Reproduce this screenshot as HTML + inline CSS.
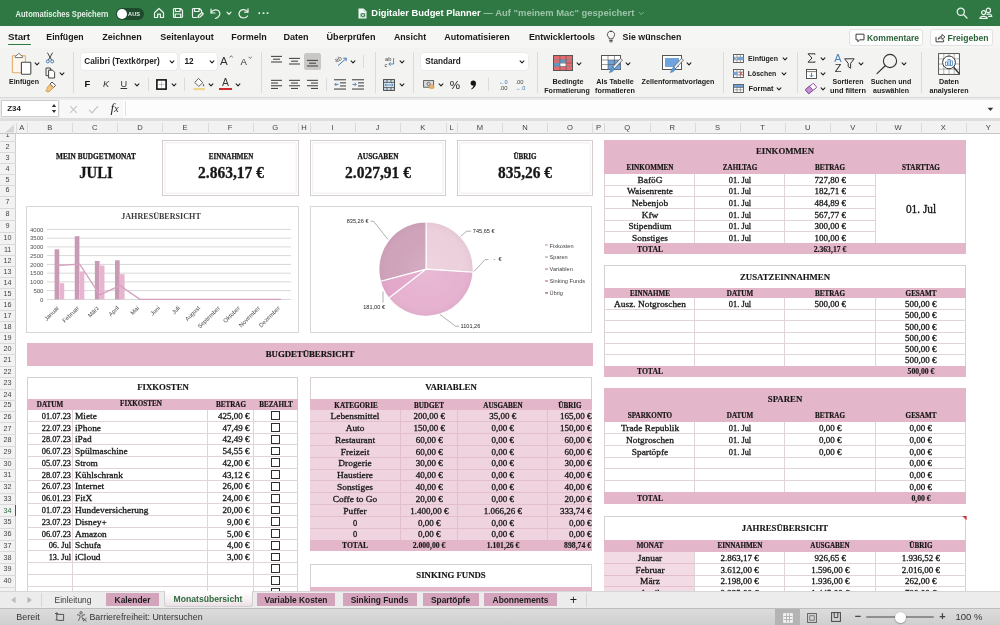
<!DOCTYPE html>
<html><head><meta charset="utf-8"><title>Excel</title>
<style>
html,body{margin:0;padding:0;}
body{width:1000px;height:625px;overflow:hidden;position:relative;background:#fff;font-family:"Liberation Sans",sans-serif;}
div{box-sizing:border-box;}
#w{position:absolute;left:0;top:0;width:1000px;height:625px;overflow:hidden;will-change:transform;}
svg{position:absolute;overflow:visible;}
.t{position:absolute;width:300px;white-space:nowrap;font-family:'Liberation Serif',serif;color:#161616;}
.c{text-align:center;transform-origin:center center;}
.r{text-align:right;transform-origin:right center;}
.l{text-align:left;transform-origin:left center;}
</style></head><body><div id="w">
<div style="position:absolute;left:0.00px;top:0.00px;width:1000.00px;height:26.00px;background:#2f7844;"></div>
<div class="t c" style="left:-88.5px;top:9px;height:11px;line-height:11px;font-size:8.2px;font-weight:bold;color:#e4efe7;font-family:'Liberation Sans', sans-serif;transform:scaleX(0.924);">Automatisches Speichern</div>
<div style="position:absolute;left:115.80px;top:7.80px;width:28.50px;height:12.00px;background:#1f4a2d;border-radius:6px;"></div>
<div style="position:absolute;left:117.00px;top:9.00px;width:9.60px;height:9.60px;background:#fff;border-radius:5px;"></div>
<div class="t c" style="left:-15.7px;top:10px;height:8px;line-height:8px;font-size:6.0px;font-weight:bold;color:#e8f0ea;font-family:'Liberation Sans', sans-serif;transform:scaleX(0.931);">AUS</div>
<svg style="left:153.00px;top:7.00px;" width="12" height="12" viewBox="0 0 12 12"><path d="M1.5 5.8 L6 1.5 L10.5 5.8 V10.5 H7.4 V7.2 H4.6 V10.5 H1.5 Z" stroke="#eaf3ec" fill="none" stroke-width="1.2" stroke-linecap="round" stroke-linejoin="round"/></svg>
<svg style="left:171.50px;top:7.00px;" width="12" height="12" viewBox="0 0 12 12"><path d="M1.5 2.5 a1 1 0 0 1 1-1 H8.5 L10.5 3.5 V9.5 a1 1 0 0 1 -1 1 H2.5 a1 1 0 0 1 -1 -1 Z M3.5 1.8 V4.5 H8 V1.8 M3.3 10.3 V7 H8.7 V10.3" stroke="#eaf3ec" fill="none" stroke-width="1.2" stroke-linecap="round" stroke-linejoin="round"/></svg>
<svg style="left:190.50px;top:7.00px;" width="13" height="12" viewBox="0 0 13 12"><path d="M10.5 5 V3.5 L8.5 1.5 H2.5 a1 1 0 0 0 -1 1 V9.5 a1 1 0 0 0 1 1 H5.5 M3.5 1.8 V4.5 H8 V1.8" stroke="#eaf3ec" fill="none" stroke-width="1.2" stroke-linecap="round" stroke-linejoin="round"/><path d="M7 10.5 L7.5 8.5 L11 5.5 L12.3 7 L9 10 Z" stroke="#eaf3ec" fill="none" stroke-width="1.2" stroke-linecap="round" stroke-linejoin="round"/></svg>
<svg style="left:209.00px;top:6.50px;" width="13" height="13" viewBox="0 0 13 13"><path d="M2 2 V6 H6" stroke="#eaf3ec" fill="none" stroke-width="1.2" stroke-linecap="round" stroke-linejoin="round"/><path d="M2.2 5.8 C4 2.5 8 2 10 4.2 C12 6.8 10.5 10 6.5 11.5" stroke="#eaf3ec" fill="none" stroke-width="1.2" stroke-linecap="round" stroke-linejoin="round"/></svg>
<svg style="left:225.50px;top:11.00px;" width="6" height="5" viewBox="0 0 6 5"><path d="M1 1.2 L3 3.4 L5 1.2" stroke="#eaf3ec" fill="none" stroke-width="1.2" stroke-linecap="round" stroke-linejoin="round"/></svg>
<svg style="left:236.50px;top:6.50px;" width="13" height="13" viewBox="0 0 13 13"><path d="M11 1.8 V5.2 H7.6" stroke="#eaf3ec" fill="none" stroke-width="1.2" stroke-linecap="round" stroke-linejoin="round"/><path d="M10.8 5 C9 2 4.5 1.6 2.6 4.6 C1 7.6 2.8 10.8 6.3 11 C8 11 9.6 10.4 10.6 9" stroke="#eaf3ec" fill="none" stroke-width="1.2" stroke-linecap="round" stroke-linejoin="round"/></svg>
<div style="position:absolute;left:256.00px;top:3.00px;width:16.00px;height:20.00px;line-height:20.00px;font-family:'Liberation Sans', sans-serif;font-size:11px;font-weight:bold;text-align:center;color:#eaf3ec;white-space:nowrap;letter-spacing:0.5px;">&#183;&#183;&#183;</div>
<svg style="left:358.00px;top:7.50px;" width="9" height="11" viewBox="0 0 9 11"><path d="M0.5 0.5 H5.6 L8.5 3.4 V10.5 H0.5 Z" fill="#f3f8f4"/><path d="M5.6 0.5 V3.4 H8.5" fill="#b9d4c0"/><rect x="2.6" y="5.2" width="4.6" height="4" fill="#2f7844"/><path d="M3.3 5.9 L6.5 8.6 M6.5 5.9 L3.3 8.6" stroke="#fff" stroke-width="0.8"/></svg>
<div class="t c" style="left:276.1px;top:7px;height:12px;line-height:12px;font-size:9.2px;font-weight:bold;color:#ffffff;font-family:'Liberation Sans', sans-serif;transform:scaleX(1.019);">Digitaler Budget Planner</div>
<div class="t c" style="left:408.8px;top:7px;height:12px;line-height:12px;font-size:9.2px;font-weight:bold;color:#9cc3a7;font-family:'Liberation Sans', sans-serif;transform:scaleX(1.024);">— Auf "meinem Mac" gespeichert</div>
<svg style="left:637.50px;top:11.00px;" width="7" height="5" viewBox="0 0 7 5"><path d="M1 1.2 L3.3 3.5 L5.6 1.2" stroke="#8db899" fill="none" stroke-width="1"/></svg>
<svg style="left:956.00px;top:7.00px;" width="12" height="12" viewBox="0 0 12 12"><circle cx="4.8" cy="4.8" r="3.6" stroke="#eaf3ec" fill="none" stroke-width="1.2" stroke-linecap="round" stroke-linejoin="round"/><path d="M7.5 7.5 L11 11" stroke="#eaf3ec" fill="none" stroke-width="1.2" stroke-linecap="round" stroke-linejoin="round"/></svg>
<svg style="left:979.00px;top:6.50px;" width="14" height="13" viewBox="0 0 14 13"><circle cx="9.3" cy="3.4" r="2.2" stroke="#eaf3ec" fill="none" stroke-width="1.2" stroke-linecap="round" stroke-linejoin="round"/><circle cx="4.6" cy="5.6" r="2" stroke="#eaf3ec" fill="none" stroke-width="1.2" stroke-linecap="round" stroke-linejoin="round"/><path d="M1 11.5 C1 8.6 8 8.6 8.2 11.5 Z" stroke="#eaf3ec" fill="none" stroke-width="1.2" stroke-linecap="round" stroke-linejoin="round"/><path d="M8 7.4 C10 6.6 12.8 7.2 12.8 9.4 H9.6" stroke="#eaf3ec" fill="none" stroke-width="1.2" stroke-linecap="round" stroke-linejoin="round"/></svg>
<div style="position:absolute;left:0.00px;top:26.00px;width:1000.00px;height:22.00px;background:#f6f6f5;"></div>
<div class="t c" style="left:-130.9px;top:31px;height:12px;line-height:12px;font-size:9.2px;font-weight:bold;color:#1a1a1a;font-family:'Liberation Sans', sans-serif;transform:scaleX(1.059);">Start</div>
<div class="t c" style="left:-84.7px;top:31px;height:12px;line-height:12px;font-size:9.2px;font-weight:bold;color:#1a1a1a;font-family:'Liberation Sans', sans-serif;transform:scaleX(0.950);">Einfügen</div>
<div class="t c" style="left:-27.8px;top:31px;height:12px;line-height:12px;font-size:9.2px;font-weight:bold;color:#1a1a1a;font-family:'Liberation Sans', sans-serif;transform:scaleX(0.981);">Zeichnen</div>
<div class="t c" style="left:36.8px;top:31px;height:12px;line-height:12px;font-size:9.2px;font-weight:bold;color:#1a1a1a;font-family:'Liberation Sans', sans-serif;transform:scaleX(0.978);">Seitenlayout</div>
<div class="t c" style="left:98.8px;top:31px;height:12px;line-height:12px;font-size:9.2px;font-weight:bold;color:#1a1a1a;font-family:'Liberation Sans', sans-serif;transform:scaleX(0.978);">Formeln</div>
<div class="t c" style="left:146.0px;top:31px;height:12px;line-height:12px;font-size:9.2px;font-weight:bold;color:#1a1a1a;font-family:'Liberation Sans', sans-serif;transform:scaleX(0.986);">Daten</div>
<div class="t c" style="left:200.5px;top:31px;height:12px;line-height:12px;font-size:9.2px;font-weight:bold;color:#1a1a1a;font-family:'Liberation Sans', sans-serif;transform:scaleX(0.988);">Überprüfen</div>
<div class="t c" style="left:259.5px;top:31px;height:12px;line-height:12px;font-size:9.2px;font-weight:bold;color:#1a1a1a;font-family:'Liberation Sans', sans-serif;transform:scaleX(0.955);">Ansicht</div>
<div class="t c" style="left:326.7px;top:31px;height:12px;line-height:12px;font-size:9.2px;font-weight:bold;color:#1a1a1a;font-family:'Liberation Sans', sans-serif;transform:scaleX(0.977);">Automatisieren</div>
<div class="t c" style="left:411.5px;top:31px;height:12px;line-height:12px;font-size:9.2px;font-weight:bold;color:#1a1a1a;font-family:'Liberation Sans', sans-serif;transform:scaleX(0.975);">Entwicklertools</div>
<div class="t c" style="left:502.2px;top:31px;height:12px;line-height:12px;font-size:9.2px;font-weight:bold;color:#1a1a1a;font-family:'Liberation Sans', sans-serif;transform:scaleX(0.959);">Sie wünschen</div>
<div style="position:absolute;left:8.00px;top:43.60px;width:23.00px;height:1.70px;background:#2f7844;border-radius:1px;"></div>
<svg style="left:606.00px;top:30.00px;" width="10" height="13" viewBox="0 0 10 13"><path d="M5 1.2 C2.6 1.2 1.4 3 1.4 4.6 C1.4 6.4 3 7.2 3.2 8.8 H6.8 C7 7.2 8.6 6.4 8.6 4.6 C8.6 3 7.4 1.2 5 1.2 Z M3.6 10.4 H6.4 M4 11.8 H6" stroke="#333" stroke-width="0.9" fill="none" stroke-linecap="round"/></svg>
<div style="position:absolute;left:849.00px;top:28.50px;width:74.00px;height:17.00px;background:#fdfdfd;border:1px solid #e2e2e2;border-radius:3px;"></div>
<svg style="left:854.80px;top:32.60px;" width="10" height="10" viewBox="0 0 10 10"><path d="M1 1.2 H9 V6.8 H4.6 L2.8 8.8 V6.8 H1 Z" stroke="#3f3f3f" fill="none" stroke-width="1" stroke-linejoin="round"/></svg>
<div class="t c" style="left:742.5px;top:32px;height:12px;line-height:12px;font-size:8.8px;font-weight:bold;color:#2b6238;font-family:'Liberation Sans', sans-serif;transform:scaleX(0.969);">Kommentare</div>
<div style="position:absolute;left:929.50px;top:28.50px;width:63.50px;height:17.00px;background:#fdfdfd;border:1px solid #e2e2e2;border-radius:3px;"></div>
<svg style="left:935.00px;top:32.60px;" width="11" height="10" viewBox="0 0 11 10"><path d="M1 4 V8.8 H8.6 V6.6" stroke="#3f3f3f" fill="none" stroke-width="1"/><path d="M3.2 6.4 C3.6 4.2 5.2 3.2 7 3.2 V1.4 L10 4 L7 6.4 V4.8 C5.6 4.8 4.2 5.2 3.2 6.4 Z" stroke="#3f3f3f" fill="none" stroke-width="0.9" stroke-linejoin="round"/></svg>
<div class="t c" style="left:818.0px;top:32px;height:12px;line-height:12px;font-size:8.8px;font-weight:bold;color:#2b6238;font-family:'Liberation Sans', sans-serif;transform:scaleX(0.977);">Freigeben</div>
<div style="position:absolute;left:0.00px;top:48.00px;width:1000.00px;height:49.50px;background:#f3f3f2;"></div>
<div style="position:absolute;left:0.00px;top:97.00px;width:1000.00px;height:1.00px;background:#d9d9d9;"></div>
<div style="position:absolute;left:73.00px;top:52.00px;width:1.00px;height:41.00px;background:#dbdbdb;"></div>
<div style="position:absolute;left:260.50px;top:52.00px;width:1.00px;height:41.00px;background:#dbdbdb;"></div>
<div style="position:absolute;left:375.00px;top:52.00px;width:1.00px;height:41.00px;background:#dbdbdb;"></div>
<div style="position:absolute;left:413.00px;top:52.00px;width:1.00px;height:41.00px;background:#dbdbdb;"></div>
<div style="position:absolute;left:537.00px;top:52.00px;width:1.00px;height:41.00px;background:#dbdbdb;"></div>
<div style="position:absolute;left:723.00px;top:52.00px;width:1.00px;height:41.00px;background:#dbdbdb;"></div>
<div style="position:absolute;left:797.00px;top:52.00px;width:1.00px;height:41.00px;background:#dbdbdb;"></div>
<div style="position:absolute;left:921.00px;top:52.00px;width:1.00px;height:41.00px;background:#dbdbdb;"></div>
<svg style="left:11.00px;top:51.60px;" width="22" height="24" viewBox="0 0 22 24"><rect x="1.4" y="3.6" width="13" height="17.2" rx="1" fill="#fdf6ec" stroke="#e0b070" stroke-width="1.1"/><path d="M4.2 4.6 L7.9 1.4 L11.6 4.6 V5.6 H4.2 Z" fill="#fff" stroke="#666" stroke-width="0.9" stroke-linejoin="round"/><rect x="10.4" y="10.2" width="9.4" height="12" rx="0.8" fill="#fff" stroke="#4a4a4a" stroke-width="1.1"/></svg>
<svg style="left:33.50px;top:61.50px;" width="6" height="4" viewBox="0 0 6 4"><path d="M1.1 0.9 L3 2.9 L4.9 0.9" stroke="#222" fill="none" stroke-width="1.1" stroke-linecap="round" stroke-linejoin="round"/></svg>
<div class="t c" style="left:-126.5px;top:76px;height:11px;line-height:11px;font-size:7.7px;font-weight:bold;color:#1c1c1c;font-family:'Liberation Sans', sans-serif;transform:scaleX(0.914);">Einfügen</div>
<svg style="left:45.00px;top:52.00px;" width="10" height="12" viewBox="0 0 10 12"><path d="M2.6 1 L6.6 8 M7.4 1 L3.4 8" stroke="#444" stroke-width="1" stroke-linecap="round"/><circle cx="2.8" cy="9.4" r="1.5" stroke="#4a7bb5" fill="none" stroke-width="1"/><circle cx="7.2" cy="9.4" r="1.5" stroke="#4a7bb5" fill="none" stroke-width="1"/></svg>
<svg style="left:44.50px;top:67.00px;" width="11" height="12" viewBox="0 0 11 12"><path d="M1 1 H5.4 V3 H7.4 M1 1 V8.6 H3.4" stroke="#444" stroke-width="1" fill="none"/><path d="M3.6 3.2 H7.6 L9.6 5.2 V11 H3.6 Z" stroke="#444" stroke-width="1" fill="#fff"/></svg>
<svg style="left:58.50px;top:71.50px;" width="6" height="4" viewBox="0 0 6 4"><path d="M1.1 0.9 L3 2.9 L4.9 0.9" stroke="#222" fill="none" stroke-width="1.1" stroke-linecap="round" stroke-linejoin="round"/></svg>
<svg style="left:44.50px;top:81.00px;" width="12" height="12" viewBox="0 0 12 12"><path d="M7 1 L10.6 4.4 L8.6 6.4 L5 3 Z" fill="#fff" stroke="#444" stroke-width="0.9"/><path d="M5 3.4 L8.2 6.6 L4.4 10.6 C3 11.2 1.4 10.6 0.8 9.6 C2 9.2 2.4 8.2 2.2 6.6 Z" fill="#f1c680" stroke="#c98f3a" stroke-width="0.9"/></svg>
<div style="position:absolute;left:80.50px;top:53.00px;width:96.00px;height:16.50px;background:#fff;border-radius:3px;box-shadow:0 0 0 0.5px #e3e3e3;"></div>
<div class="t c" style="left:-27.8px;top:55px;height:12px;line-height:12px;font-size:8.3px;font-weight:bold;color:#1c1c1c;font-family:'Liberation Sans', sans-serif;transform:scaleX(0.994);">Calibri (Textkörper)</div>
<svg style="left:168.50px;top:60.00px;" width="6" height="4" viewBox="0 0 6 4"><path d="M1.1 0.9 L3 2.9 L4.9 0.9" stroke="#222" fill="none" stroke-width="1.1" stroke-linecap="round" stroke-linejoin="round"/></svg>
<div style="position:absolute;left:180.00px;top:53.00px;width:36.50px;height:16.50px;background:#fff;border-radius:3px;box-shadow:0 0 0 0.5px #e3e3e3;"></div>
<div class="t c" style="left:38.6px;top:55px;height:12px;line-height:12px;font-size:8.3px;font-weight:bold;color:#1c1c1c;font-family:'Liberation Sans', sans-serif;transform:scaleX(0.997);">12</div>
<svg style="left:208.50px;top:60.00px;" width="6" height="4" viewBox="0 0 6 4"><path d="M1.1 0.9 L3 2.9 L4.9 0.9" stroke="#222" fill="none" stroke-width="1.1" stroke-linecap="round" stroke-linejoin="round"/></svg>
<div style="position:absolute;left:220.00px;top:51.00px;width:14.00px;height:20.00px;line-height:20.00px;font-family:'Liberation Sans', sans-serif;font-size:11.5px;font-weight:normal;text-align:left;color:#333;white-space:nowrap;">A</div>
<svg style="left:229.00px;top:55.00px;" width="5" height="3" viewBox="0 0 5 3"><path d="M0.6 2.4 L2.2 0.8 L3.8 2.4" stroke="#333" fill="none" stroke-width="0.7"/></svg>
<div style="position:absolute;left:240.50px;top:52.00px;width:14.00px;height:20.00px;line-height:20.00px;font-family:'Liberation Sans', sans-serif;font-size:9.6px;font-weight:normal;text-align:left;color:#333;white-space:nowrap;">A</div>
<svg style="left:247.50px;top:56.00px;" width="5" height="3" viewBox="0 0 5 3"><path d="M0.6 0.8 L2.2 2.4 L3.8 0.8" stroke="#333" fill="none" stroke-width="0.7"/></svg>
<div style="position:absolute;left:84.50px;top:74.00px;width:10.00px;height:20.00px;line-height:20.00px;font-family:'Liberation Sans', sans-serif;font-size:9.4px;font-weight:bold;text-align:left;color:#111;white-space:nowrap;">F</div>
<div style="position:absolute;left:103.00px;top:74.00px;width:10.00px;height:20.00px;line-height:20.00px;font-family:'Liberation Sans', sans-serif;font-size:9.4px;font-weight:normal;text-align:left;color:#333;white-space:nowrap;font-style:italic;">K</div>
<div style="position:absolute;left:120.50px;top:74.00px;width:10.00px;height:20.00px;line-height:20.00px;font-family:'Liberation Sans', sans-serif;font-size:9.2px;font-weight:normal;text-align:left;color:#333;white-space:nowrap;text-decoration:underline;">U</div>
<svg style="left:134.00px;top:83.00px;" width="6" height="4" viewBox="0 0 6 4"><path d="M1.1 0.9 L3 2.9 L4.9 0.9" stroke="#222" fill="none" stroke-width="1.1" stroke-linecap="round" stroke-linejoin="round"/></svg>
<div style="position:absolute;left:148.00px;top:78.00px;width:1.00px;height:13.00px;background:#dbdbdb;"></div>
<svg style="left:155.50px;top:78.50px;" width="11" height="11" viewBox="0 0 11 11"><rect x="0.9" y="0.9" width="9.2" height="9.2" fill="#fff" stroke="#111" stroke-width="1.6"/><path d="M5.5 2.5 V8.5 M2.5 5.5 H8.5" stroke="#999" stroke-width="0.6"/></svg>
<svg style="left:171.00px;top:83.00px;" width="6" height="4" viewBox="0 0 6 4"><path d="M1.1 0.9 L3 2.9 L4.9 0.9" stroke="#222" fill="none" stroke-width="1.1" stroke-linecap="round" stroke-linejoin="round"/></svg>
<div style="position:absolute;left:184.00px;top:78.00px;width:1.00px;height:13.00px;background:#dbdbdb;"></div>
<svg style="left:192.50px;top:77.00px;" width="13" height="14" viewBox="0 0 13 14"><path d="M5.4 1.4 L9.8 5.6 L5.8 9.4 L1.8 5.6 Z" fill="#fff" stroke="#555" stroke-width="0.9" stroke-linejoin="round"/><path d="M10.4 6.6 C11.4 8 11.6 9 10.6 9.4 C9.6 9 9.6 8 10.4 6.6Z" fill="#666"/><rect x="0.5" y="11" width="11.5" height="2.2" fill="#f0d58a"/></svg>
<svg style="left:207.50px;top:83.00px;" width="6" height="4" viewBox="0 0 6 4"><path d="M1.1 0.9 L3 2.9 L4.9 0.9" stroke="#222" fill="none" stroke-width="1.1" stroke-linecap="round" stroke-linejoin="round"/></svg>
<div style="position:absolute;left:219.00px;top:72.60px;width:13.00px;height:20.00px;line-height:20.00px;font-family:'Liberation Sans', sans-serif;font-size:10.4px;font-weight:normal;text-align:center;color:#333;white-space:nowrap;">A</div>
<div style="position:absolute;left:219.20px;top:87.60px;width:12.60px;height:2.30px;background:#d02b2b;"></div>
<svg style="left:234.50px;top:83.00px;" width="6" height="4" viewBox="0 0 6 4"><path d="M1.1 0.9 L3 2.9 L4.9 0.9" stroke="#222" fill="none" stroke-width="1.1" stroke-linecap="round" stroke-linejoin="round"/></svg>
<svg style="left:270.50px;top:55.00px;" width="11" height="8.399999999999999" viewBox="0 0 11 8.399999999999999"><rect x="0.0" y="0.85" width="11" height="1.1" fill="#4a4a4a"/><rect x="2.0" y="3.65" width="7" height="1.1" fill="#4a4a4a"/><rect x="0.0" y="6.45" width="11" height="1.1" fill="#4a4a4a"/></svg>
<svg style="left:288.50px;top:57.00px;" width="11" height="8.399999999999999" viewBox="0 0 11 8.399999999999999"><rect x="0.0" y="0.85" width="11" height="1.1" fill="#4a4a4a"/><rect x="2.0" y="3.65" width="7" height="1.1" fill="#4a4a4a"/><rect x="0.0" y="6.45" width="11" height="1.1" fill="#4a4a4a"/></svg>
<div style="position:absolute;left:304.00px;top:52.80px;width:16.50px;height:16.80px;background:#c9c8c7;border-radius:2.5px;"></div>
<svg style="left:306.50px;top:58.80px;" width="11" height="8.399999999999999" viewBox="0 0 11 8.399999999999999"><rect x="0.0" y="0.85" width="11" height="1.1" fill="#4a4a4a"/><rect x="2.0" y="3.65" width="7" height="1.1" fill="#4a4a4a"/><rect x="0.0" y="6.45" width="11" height="1.1" fill="#4a4a4a"/></svg>
<svg style="left:334.50px;top:55.00px;" width="14" height="12" viewBox="0 0 14 12"><text x="0.5" y="6.5" font-family="Liberation Sans" font-size="6.2" fill="#444" transform="rotate(-22 3 6)">ab</text><path d="M3 10.6 L11 3.6 M8.2 3.2 L11.4 3.2 L11 6.2" stroke="#4a7bb5" stroke-width="1" fill="none"/></svg>
<svg style="left:350.00px;top:60.00px;" width="6" height="4" viewBox="0 0 6 4"><path d="M1.1 0.9 L3 2.9 L4.9 0.9" stroke="#222" fill="none" stroke-width="1.1" stroke-linecap="round" stroke-linejoin="round"/></svg>
<div style="position:absolute;left:363.00px;top:55.00px;width:1.00px;height:13.00px;background:#dbdbdb;"></div>
<svg style="left:384.00px;top:55.50px;" width="13" height="12" viewBox="0 0 13 12"><text x="1" y="5" font-family="Liberation Sans" font-size="5.8" fill="#444">ab</text><text x="0.6" y="10.6" font-family="Liberation Sans" font-size="5.8" fill="#444">c</text><path d="M9.6 2 V8 H5 M6.6 6.2 L4.8 8 L6.6 9.8" stroke="#4a7bb5" stroke-width="0.9" fill="none"/></svg>
<svg style="left:399.00px;top:60.00px;" width="6" height="4" viewBox="0 0 6 4"><path d="M1.1 0.9 L3 2.9 L4.9 0.9" stroke="#222" fill="none" stroke-width="1.1" stroke-linecap="round" stroke-linejoin="round"/></svg>
<svg style="left:270.50px;top:79.20px;" width="11" height="10.8" viewBox="0 0 11 10.8"><rect x="0" y="0.80" width="11" height="1.1" fill="#4a4a4a"/><rect x="0" y="3.50" width="7" height="1.1" fill="#4a4a4a"/><rect x="0" y="6.20" width="11" height="1.1" fill="#4a4a4a"/><rect x="0" y="8.90" width="7" height="1.1" fill="#4a4a4a"/></svg>
<svg style="left:288.50px;top:79.20px;" width="11" height="10.8" viewBox="0 0 11 10.8"><rect x="0.0" y="0.80" width="11" height="1.1" fill="#4a4a4a"/><rect x="2.0" y="3.50" width="7" height="1.1" fill="#4a4a4a"/><rect x="0.0" y="6.20" width="11" height="1.1" fill="#4a4a4a"/><rect x="2.0" y="8.90" width="7" height="1.1" fill="#4a4a4a"/></svg>
<svg style="left:306.50px;top:79.20px;" width="11" height="10.8" viewBox="0 0 11 10.8"><rect x="0" y="0.80" width="11" height="1.1" fill="#4a4a4a"/><rect x="4" y="3.50" width="7" height="1.1" fill="#4a4a4a"/><rect x="0" y="6.20" width="11" height="1.1" fill="#4a4a4a"/><rect x="4" y="8.90" width="7" height="1.1" fill="#4a4a4a"/></svg>
<div style="position:absolute;left:326.00px;top:78.00px;width:1.00px;height:13.00px;background:#dbdbdb;"></div>
<svg style="left:334.00px;top:79.20px;" width="12" height="11" viewBox="0 0 12 11"><rect x="0" y="0.2" width="12" height="1.1" fill="#4a4a4a"/><rect x="6" y="3.3" width="6" height="1.1" fill="#4a4a4a"/><rect x="6" y="6.4" width="6" height="1.1" fill="#4a4a4a"/><rect x="0" y="9.5" width="12" height="1.1" fill="#4a4a4a"/><path d="M4.6 5.4 H0.8 M2.4 3.8 L0.8 5.4 L2.4 7" stroke="#4a7bb5" stroke-width="0.9" fill="none"/></svg>
<svg style="left:352.00px;top:79.20px;" width="12" height="11" viewBox="0 0 12 11"><rect x="0" y="0.2" width="12" height="1.1" fill="#4a4a4a"/><rect x="6" y="3.3" width="6" height="1.1" fill="#4a4a4a"/><rect x="6" y="6.4" width="6" height="1.1" fill="#4a4a4a"/><rect x="0" y="9.5" width="12" height="1.1" fill="#4a4a4a"/><path d="M0.4 5.4 H4.2 M2.6 3.8 L4.2 5.4 L2.6 7" stroke="#4a7bb5" stroke-width="0.9" fill="none"/></svg>
<svg style="left:382.50px;top:78.50px;" width="12" height="12" viewBox="0 0 12 12"><rect x="0.6" y="0.6" width="10.8" height="10.8" fill="#dbe8f5" stroke="#444" stroke-width="1"/><path d="M4 0.6 V3.4 M8 0.6 V3.4 M4 8.6 V11.4 M8 8.6 V11.4 M0.6 3.4 H11.4 M0.6 8.6 H11.4" stroke="#444" stroke-width="0.8"/><path d="M2 6 H10 M3.4 4.8 L2 6 L3.4 7.2 M8.6 4.8 L10 6 L8.6 7.2" stroke="#3b78b8" stroke-width="0.8" fill="none"/></svg>
<svg style="left:399.00px;top:83.00px;" width="6" height="4" viewBox="0 0 6 4"><path d="M1.1 0.9 L3 2.9 L4.9 0.9" stroke="#222" fill="none" stroke-width="1.1" stroke-linecap="round" stroke-linejoin="round"/></svg>
<div style="position:absolute;left:421.00px;top:53.00px;width:106.50px;height:16.50px;background:#fff;border-radius:3px;box-shadow:0 0 0 0.5px #e3e3e3;"></div>
<div class="t c" style="left:292.8px;top:55px;height:12px;line-height:12px;font-size:8.3px;font-weight:bold;color:#1c1c1c;font-family:'Liberation Sans', sans-serif;transform:scaleX(0.987);">Standard</div>
<svg style="left:519.00px;top:60.00px;" width="6" height="4" viewBox="0 0 6 4"><path d="M1.1 0.9 L3 2.9 L4.9 0.9" stroke="#222" fill="none" stroke-width="1.1" stroke-linecap="round" stroke-linejoin="round"/></svg>
<svg style="left:422.50px;top:80.00px;" width="12" height="10" viewBox="0 0 12 10"><rect x="0.6" y="0.6" width="10" height="6.6" fill="#ddd" stroke="#555" stroke-width="0.9"/><circle cx="5.6" cy="3.9" r="1.6" fill="none" stroke="#555" stroke-width="0.8"/><ellipse cx="8.6" cy="7.4" rx="2.4" ry="1.2" fill="#f0c078" stroke="#c58b3a" stroke-width="0.6"/><ellipse cx="8.6" cy="6" rx="2.4" ry="1.2" fill="#f0c078" stroke="#c58b3a" stroke-width="0.6"/></svg>
<svg style="left:438.00px;top:83.00px;" width="6" height="4" viewBox="0 0 6 4"><path d="M1.1 0.9 L3 2.9 L4.9 0.9" stroke="#222" fill="none" stroke-width="1.1" stroke-linecap="round" stroke-linejoin="round"/></svg>
<div style="position:absolute;left:448.00px;top:74.50px;width:14.00px;height:20.00px;line-height:20.00px;font-family:'Liberation Sans', sans-serif;font-size:11.6px;font-weight:normal;text-align:center;color:#222;white-space:nowrap;">%</div>
<svg style="left:469.00px;top:79.50px;" width="8" height="11" viewBox="0 0 8 11"><path d="M4.2 0.6 C6 0.6 7 1.9 7 3.6 C7 6 5.2 8.2 2.6 9.4 L2.2 8.7 C3.6 7.8 4.4 6.7 4.5 5.6 C2.8 5.8 1.6 4.7 1.6 3.2 C1.6 1.7 2.7 0.6 4.2 0.6 Z" fill="#151515"/></svg>
<div style="position:absolute;left:488.00px;top:78.00px;width:1.00px;height:13.00px;background:#dbdbdb;"></div>
<div class="t l" style="left:499.0px;top:78px;height:8px;line-height:8px;font-size:5.6px;color:#3b78b8;font-family:'Liberation Sans', sans-serif;transform:scaleX(1.000);">←0</div>
<div class="t l" style="left:499.5px;top:84px;height:8px;line-height:8px;font-size:5.8px;color:#444;font-family:'Liberation Sans', sans-serif;transform:scaleX(1.000);">.00</div>
<div class="t l" style="left:515.5px;top:78px;height:8px;line-height:8px;font-size:5.8px;color:#444;font-family:'Liberation Sans', sans-serif;transform:scaleX(1.000);">.00</div>
<div class="t l" style="left:515.0px;top:84px;height:8px;line-height:8px;font-size:5.6px;color:#3b78b8;font-family:'Liberation Sans', sans-serif;transform:scaleX(1.000);">→.0</div>
<svg style="left:553.00px;top:54.50px;" width="20" height="16" viewBox="0 0 20 16"><rect x="0.5" y="0.5" width="19" height="15" fill="#fff" stroke="#555" stroke-width="1"/><rect x="1" y="1" width="18" height="3.4" fill="#e36a6f"/><rect x="1" y="4.8" width="6" height="3" fill="#e36a6f"/><rect x="7" y="4.8" width="6" height="3" fill="#5b9bd5"/><rect x="1" y="8.2" width="12" height="3" fill="#5b9bd5"/><rect x="7" y="8.2" width="6" height="3" fill="#fff"/><rect x="13" y="4.8" width="6" height="6.4" fill="#e36a6f"/><rect x="1" y="11.6" width="18" height="3.4" fill="#e36a6f"/><path d="M7 0.5 V15.5 M13 0.5 V15.5 M0.5 4.6 H19.5 M0.5 8 H19.5 M0.5 11.4 H19.5" stroke="#555" stroke-width="0.6"/></svg>
<svg style="left:576.00px;top:61.50px;" width="6" height="4" viewBox="0 0 6 4"><path d="M1.1 0.9 L3 2.9 L4.9 0.9" stroke="#222" fill="none" stroke-width="1.1" stroke-linecap="round" stroke-linejoin="round"/></svg>
<div class="t c" style="left:417.5px;top:76px;height:11px;line-height:11px;font-size:7.7px;font-weight:bold;color:#1c1c1c;font-family:'Liberation Sans', sans-serif;transform:scaleX(0.941);">Bedingte</div>
<div class="t c" style="left:417.2px;top:85px;height:11px;line-height:11px;font-size:7.7px;font-weight:bold;color:#1c1c1c;font-family:'Liberation Sans', sans-serif;transform:scaleX(0.917);">Formatierung</div>
<svg style="left:600.50px;top:55.00px;" width="22" height="20" viewBox="0 0 22 20"><rect x="0.5" y="0.5" width="19" height="14" fill="#fff" stroke="#555" stroke-width="1"/><rect x="7" y="5" width="12.5" height="9.4" fill="#6ea3dd"/><path d="M7 0.5 V14.5 M13.4 0.5 V14.5 M0.5 5 H19.5 M0.5 9.6 H19.5" stroke="#555" stroke-width="0.6"/><path d="M19.6 3.4 L21.6 5 L13.6 13.6 L11.6 12 Z" fill="#eee" stroke="#555" stroke-width="0.7"/><path d="M11.8 12 L13.6 13.6 C13 16 10.6 17.6 8.2 17.4 C9.6 16 9.6 13.6 11.8 12 Z" fill="#5b9bd5" stroke="#3b6ea5" stroke-width="0.5"/></svg>
<svg style="left:625.00px;top:61.50px;" width="6" height="4" viewBox="0 0 6 4"><path d="M1.1 0.9 L3 2.9 L4.9 0.9" stroke="#222" fill="none" stroke-width="1.1" stroke-linecap="round" stroke-linejoin="round"/></svg>
<div class="t c" style="left:465.2px;top:76px;height:11px;line-height:11px;font-size:7.7px;font-weight:bold;color:#1c1c1c;font-family:'Liberation Sans', sans-serif;transform:scaleX(0.936);">Als Tabelle</div>
<div class="t c" style="left:465.1px;top:85px;height:11px;line-height:11px;font-size:7.7px;font-weight:bold;color:#1c1c1c;font-family:'Liberation Sans', sans-serif;transform:scaleX(0.940);">formatieren</div>
<svg style="left:662.00px;top:55.00px;" width="22" height="20" viewBox="0 0 22 20"><rect x="0.5" y="0.5" width="19" height="14" fill="#fff" stroke="#555" stroke-width="1"/><rect x="3" y="3" width="14" height="9" fill="#6ea3dd"/><path d="M19.6 3.4 L21.6 5 L13.6 13.6 L11.6 12 Z" fill="#eee" stroke="#555" stroke-width="0.7"/><path d="M11.8 12 L13.6 13.6 C13 16 10.6 17.6 8.2 17.4 C9.6 16 9.6 13.6 11.8 12 Z" fill="#5b9bd5" stroke="#3b6ea5" stroke-width="0.5"/></svg>
<svg style="left:686.00px;top:61.50px;" width="6" height="4" viewBox="0 0 6 4"><path d="M1.1 0.9 L3 2.9 L4.9 0.9" stroke="#222" fill="none" stroke-width="1.1" stroke-linecap="round" stroke-linejoin="round"/></svg>
<div class="t c" style="left:527.5px;top:76px;height:11px;line-height:11px;font-size:7.7px;font-weight:bold;color:#1c1c1c;font-family:'Liberation Sans', sans-serif;transform:scaleX(0.932);">Zellenformatvorlagen</div>
<svg style="left:733.00px;top:54.00px;" width="11" height="9" viewBox="0 0 11 9"><rect x="0.5" y="0.5" width="10" height="8" fill="#fff" stroke="#555" stroke-width="0.9"/><path d="M0.5 3.2 H10.5 M0.5 5.8 H10.5 M4 0.5 V8.5 M7.4 0.5 V8.5" stroke="#555" stroke-width="0.5"/><rect x="4" y="3.2" width="6.5" height="2.6" fill="#6ea3dd"/><path d="M3 4.5 H0.4 M1.6 3.4 L0.4 4.5 L1.6 5.6" stroke="#3b78b8" stroke-width="0.7" fill="none"/></svg>
<svg style="left:733.00px;top:69.00px;" width="11" height="9" viewBox="0 0 11 9"><rect x="0.5" y="0.5" width="10" height="8" fill="#fff" stroke="#555" stroke-width="0.9"/><path d="M0.5 3.2 H10.5 M0.5 5.8 H10.5 M4 0.5 V8.5 M7.4 0.5 V8.5" stroke="#555" stroke-width="0.5"/><rect x="0.5" y="3.2" width="4" height="2.6" fill="#6ea3dd"/><path d="M6.4 2.6 L9.6 6.4 M9.6 2.6 L6.4 6.4" stroke="#d04040" stroke-width="0.9"/></svg>
<svg style="left:733.00px;top:84.00px;" width="11" height="9" viewBox="0 0 11 9"><rect x="0.5" y="0.5" width="10" height="8" fill="#fff" stroke="#555" stroke-width="0.9"/><path d="M0.5 3.2 H10.5 M0.5 5.8 H10.5 M4 0.5 V8.5 M7.4 0.5 V8.5" stroke="#555" stroke-width="0.5"/><rect x="0.5" y="0.5" width="10" height="2.7" fill="#6ea3dd" stroke="#555" stroke-width="0.6"/></svg>
<div class="t c" style="left:613.0px;top:53px;height:11px;line-height:11px;font-size:7.7px;font-weight:bold;color:#1c1c1c;font-family:'Liberation Sans', sans-serif;transform:scaleX(0.911);">Einfügen</div>
<div class="t c" style="left:612.2px;top:68px;height:11px;line-height:11px;font-size:7.7px;font-weight:bold;color:#1c1c1c;font-family:'Liberation Sans', sans-serif;transform:scaleX(0.900);">Löschen</div>
<div class="t c" style="left:610.5px;top:83px;height:11px;line-height:11px;font-size:7.7px;font-weight:bold;color:#1c1c1c;font-family:'Liberation Sans', sans-serif;transform:scaleX(0.958);">Format</div>
<svg style="left:782.00px;top:56.50px;" width="6" height="4" viewBox="0 0 6 4"><path d="M1.1 0.9 L3 2.9 L4.9 0.9" stroke="#222" fill="none" stroke-width="1.1" stroke-linecap="round" stroke-linejoin="round"/></svg>
<svg style="left:780.50px;top:71.50px;" width="6" height="4" viewBox="0 0 6 4"><path d="M1.1 0.9 L3 2.9 L4.9 0.9" stroke="#222" fill="none" stroke-width="1.1" stroke-linecap="round" stroke-linejoin="round"/></svg>
<svg style="left:776.00px;top:86.50px;" width="6" height="4" viewBox="0 0 6 4"><path d="M1.1 0.9 L3 2.9 L4.9 0.9" stroke="#222" fill="none" stroke-width="1.1" stroke-linecap="round" stroke-linejoin="round"/></svg>
<svg style="left:806.50px;top:53.00px;" width="9" height="10" viewBox="0 0 9 10"><path d="M8 1.6 V0.8 H1 L5 5 L1 9.2 H8 V8.4" stroke="#333" stroke-width="1" fill="none" stroke-linejoin="round"/></svg>
<svg style="left:820.00px;top:56.50px;" width="6" height="4" viewBox="0 0 6 4"><path d="M1.1 0.9 L3 2.9 L4.9 0.9" stroke="#222" fill="none" stroke-width="1.1" stroke-linecap="round" stroke-linejoin="round"/></svg>
<svg style="left:805.50px;top:68.50px;" width="11" height="10" viewBox="0 0 11 10"><rect x="0.5" y="0.5" width="10" height="9" fill="#fff" stroke="#444" stroke-width="0.9"/><path d="M0.5 2.6 H10.5" stroke="#444" stroke-width="0.7"/><path d="M5.5 3.8 V7.8 M3.8 6.2 L5.5 7.9 L7.2 6.2" stroke="#3b78b8" stroke-width="0.9" fill="none"/></svg>
<svg style="left:820.00px;top:71.50px;" width="6" height="4" viewBox="0 0 6 4"><path d="M1.1 0.9 L3 2.9 L4.9 0.9" stroke="#222" fill="none" stroke-width="1.1" stroke-linecap="round" stroke-linejoin="round"/></svg>
<svg style="left:805.00px;top:83.00px;" width="12" height="11" viewBox="0 0 12 11"><g transform="rotate(-38 6 5.5)"><rect x="0.8" y="2.8" width="10.4" height="5.4" rx="0.8" fill="#fff" stroke="#8a4a9a" stroke-width="0.9"/><rect x="0.8" y="2.8" width="5.6" height="5.4" rx="0.8" fill="#c58fd3" stroke="#8a4a9a" stroke-width="0.9"/></g></svg>
<svg style="left:820.00px;top:86.50px;" width="6" height="4" viewBox="0 0 6 4"><path d="M1.1 0.9 L3 2.9 L4.9 0.9" stroke="#222" fill="none" stroke-width="1.1" stroke-linecap="round" stroke-linejoin="round"/></svg>
<div class="t c" style="left:688.0px;top:51px;height:14px;line-height:14px;font-size:11px;color:#4a80bd;font-family:'Liberation Sans', sans-serif;transform:scaleX(1.000);">A</div>
<div class="t c" style="left:688.0px;top:61px;height:14px;line-height:14px;font-size:11px;color:#333;font-family:'Liberation Sans', sans-serif;transform:scaleX(1.000);">Z</div>
<svg style="left:843.50px;top:58.00px;" width="11" height="12" viewBox="0 0 11 12"><path d="M0.6 0.8 H10.2 L6.6 5.4 V10.2 L4.2 8.6 V5.4 Z" stroke="#333" stroke-width="1" fill="none" stroke-linejoin="round"/></svg>
<svg style="left:858.00px;top:61.50px;" width="6" height="4" viewBox="0 0 6 4"><path d="M1.1 0.9 L3 2.9 L4.9 0.9" stroke="#222" fill="none" stroke-width="1.1" stroke-linecap="round" stroke-linejoin="round"/></svg>
<div class="t c" style="left:698.0px;top:76px;height:11px;line-height:11px;font-size:7.7px;font-weight:bold;color:#1c1c1c;font-family:'Liberation Sans', sans-serif;transform:scaleX(0.917);">Sortieren</div>
<div class="t c" style="left:698.0px;top:85px;height:11px;line-height:11px;font-size:7.7px;font-weight:bold;color:#1c1c1c;font-family:'Liberation Sans', sans-serif;transform:scaleX(0.957);">und filtern</div>
<svg style="left:876.00px;top:52.50px;" width="23" height="22" viewBox="0 0 23 22"><circle cx="14" cy="8" r="6.6" stroke="#333" stroke-width="1.1" fill="none"/><path d="M9.2 12.8 L1 20.6" stroke="#333" stroke-width="1.2" stroke-linecap="round"/></svg>
<svg style="left:901.00px;top:61.50px;" width="6" height="4" viewBox="0 0 6 4"><path d="M1.1 0.9 L3 2.9 L4.9 0.9" stroke="#222" fill="none" stroke-width="1.1" stroke-linecap="round" stroke-linejoin="round"/></svg>
<div class="t c" style="left:741.2px;top:76px;height:11px;line-height:11px;font-size:7.7px;font-weight:bold;color:#1c1c1c;font-family:'Liberation Sans', sans-serif;transform:scaleX(0.919);">Suchen und</div>
<div class="t c" style="left:741.0px;top:85px;height:11px;line-height:11px;font-size:7.7px;font-weight:bold;color:#1c1c1c;font-family:'Liberation Sans', sans-serif;transform:scaleX(0.915);">auswählen</div>
<svg style="left:938.00px;top:52.50px;" width="23" height="23" viewBox="0 0 23 23"><rect x="0.6" y="0.6" width="20.8" height="20.8" fill="#fff" stroke="#444" stroke-width="0.9"/><path d="M0.6 5.8 H21.4 M0.6 11 H21.4 M0.6 16.2 H21.4 M5.8 0.6 V21.4 M11 0.6 V21.4 M16.2 0.6 V21.4" stroke="#666" stroke-width="0.5"/><circle cx="11" cy="9.4" r="6.4" fill="#fff" stroke="#333" stroke-width="1"/><rect x="7.6" y="9" width="2" height="3.6" fill="none" stroke="#3b78b8" stroke-width="0.7"/><rect x="10" y="6.6" width="2" height="6" fill="none" stroke="#3b78b8" stroke-width="0.7"/><rect x="12.4" y="8" width="2" height="4.6" fill="none" stroke="#3b78b8" stroke-width="0.7"/><path d="M15.6 14.2 L21.6 21" stroke="#333" stroke-width="1.3"/></svg>
<div class="t c" style="left:799.0px;top:76px;height:11px;line-height:11px;font-size:7.7px;font-weight:bold;color:#1c1c1c;font-family:'Liberation Sans', sans-serif;transform:scaleX(0.935);">Daten</div>
<div class="t c" style="left:799.0px;top:85px;height:11px;line-height:11px;font-size:7.7px;font-weight:bold;color:#1c1c1c;font-family:'Liberation Sans', sans-serif;transform:scaleX(0.920);">analysieren</div>
<div style="position:absolute;left:0.00px;top:98.00px;width:1000.00px;height:23.00px;background:#ecebeb;"></div>
<div style="position:absolute;left:0.50px;top:99.50px;width:58.00px;height:17.50px;background:#fff;border:1px solid #cdcdcd;border-radius:1px;"></div>
<div class="t c" style="left:-136.2px;top:103px;height:11px;line-height:11px;font-size:8.0px;font-weight:bold;color:#1d1d1d;font-family:'Liberation Sans', sans-serif;transform:scaleX(0.987);">Z34</div>
<svg style="left:50.50px;top:103.00px;" width="6" height="11" viewBox="0 0 6 11"><path d="M0.8 4 L3 1 L5.2 4 Z M0.8 7 L3 10 L5.2 7 Z" fill="#333"/></svg>
<div style="position:absolute;left:59.50px;top:99.50px;width:940.50px;height:18.00px;background:#fdfdfd;"></div>
<div style="position:absolute;left:59.50px;top:99.50px;width:63.00px;height:18.00px;background:#f8f8f8;"></div>
<svg style="left:68.50px;top:104.50px;" width="9" height="9" viewBox="0 0 9 9"><path d="M1.2 1.2 L7.8 7.8 M7.8 1.2 L1.2 7.8" stroke="#c4c4c4" stroke-width="1.1"/></svg>
<svg style="left:88.00px;top:104.50px;" width="11" height="9" viewBox="0 0 11 9"><path d="M1 4.8 L4 7.8 L10 1.2" stroke="#c4c4c4" stroke-width="1.2" fill="none"/></svg>
<div style="position:absolute;left:110.50px;top:98.20px;width:14.00px;height:20.00px;line-height:20.00px;font-family:'Liberation Serif', serif;font-size:13.5px;font-weight:normal;text-align:left;color:#2a2a2a;white-space:nowrap;"><i>f</i><span style="font-size:10px;font-style:italic">x</span></div>
<div style="position:absolute;left:124.50px;top:101.00px;width:1.00px;height:15.00px;background:#e2e2e2;"></div>
<svg style="left:987.00px;top:106.50px;" width="7" height="5" viewBox="0 0 7 5"><path d="M0.6 0.8 L3.4 4 L6.2 0.8 Z" fill="#333"/></svg>
<div style="position:absolute;left:0.00px;top:117.50px;width:1000.00px;height:3.50px;background:#dedede;"></div>
<div style="position:absolute;left:0.00px;top:121.00px;width:1000.00px;height:470.50px;background:#fff;"></div>
<div style="position:absolute;left:0.00px;top:120.50px;width:1000.00px;height:13.50px;background:#f2f2f2;border-bottom:1px solid #c6c6c6;"></div>
<div style="position:absolute;left:15.50px;top:122.50px;width:1.00px;height:11.00px;background:#dbdbdb;"></div>
<div class="t c" style="left:-128.3px;top:122px;height:11px;line-height:11px;font-size:7.6px;color:#3f3f3f;font-family:'Liberation Sans', sans-serif;transform:scaleX(1.000);">A</div>
<div style="position:absolute;left:26.50px;top:122.50px;width:1.00px;height:11.00px;background:#dbdbdb;"></div>
<div class="t c" style="left:-100.2px;top:122px;height:11px;line-height:11px;font-size:7.6px;color:#3f3f3f;font-family:'Liberation Sans', sans-serif;transform:scaleX(1.000);">B</div>
<div style="position:absolute;left:71.50px;top:122.50px;width:1.00px;height:11.00px;background:#dbdbdb;"></div>
<div class="t c" style="left:-55.2px;top:122px;height:11px;line-height:11px;font-size:7.6px;color:#3f3f3f;font-family:'Liberation Sans', sans-serif;transform:scaleX(1.000);">C</div>
<div style="position:absolute;left:116.50px;top:122.50px;width:1.00px;height:11.00px;background:#dbdbdb;"></div>
<div class="t c" style="left:-10.1px;top:122px;height:11px;line-height:11px;font-size:7.6px;color:#3f3f3f;font-family:'Liberation Sans', sans-serif;transform:scaleX(1.000);">D</div>
<div style="position:absolute;left:161.50px;top:122.50px;width:1.00px;height:11.00px;background:#dbdbdb;"></div>
<div class="t c" style="left:35.1px;top:122px;height:11px;line-height:11px;font-size:7.6px;color:#3f3f3f;font-family:'Liberation Sans', sans-serif;transform:scaleX(1.000);">E</div>
<div style="position:absolute;left:207.50px;top:122.50px;width:1.00px;height:11.00px;background:#dbdbdb;"></div>
<div class="t c" style="left:80.1px;top:122px;height:11px;line-height:11px;font-size:7.6px;color:#3f3f3f;font-family:'Liberation Sans', sans-serif;transform:scaleX(1.000);">F</div>
<div style="position:absolute;left:252.50px;top:122.50px;width:1.00px;height:11.00px;background:#dbdbdb;"></div>
<div class="t c" style="left:125.2px;top:122px;height:11px;line-height:11px;font-size:7.6px;color:#3f3f3f;font-family:'Liberation Sans', sans-serif;transform:scaleX(1.000);">G</div>
<div style="position:absolute;left:297.50px;top:122.50px;width:1.00px;height:11.00px;background:#dbdbdb;"></div>
<div class="t c" style="left:153.9px;top:122px;height:11px;line-height:11px;font-size:7.6px;color:#3f3f3f;font-family:'Liberation Sans', sans-serif;transform:scaleX(1.000);">H</div>
<div style="position:absolute;left:309.50px;top:122.50px;width:1.00px;height:11.00px;background:#dbdbdb;"></div>
<div class="t c" style="left:182.5px;top:122px;height:11px;line-height:11px;font-size:7.6px;color:#3f3f3f;font-family:'Liberation Sans', sans-serif;transform:scaleX(1.000);">I</div>
<div style="position:absolute;left:354.50px;top:122.50px;width:1.00px;height:11.00px;background:#dbdbdb;"></div>
<div class="t c" style="left:227.6px;top:122px;height:11px;line-height:11px;font-size:7.6px;color:#3f3f3f;font-family:'Liberation Sans', sans-serif;transform:scaleX(1.000);">J</div>
<div style="position:absolute;left:399.50px;top:122.50px;width:1.00px;height:11.00px;background:#dbdbdb;"></div>
<div class="t c" style="left:272.9px;top:122px;height:11px;line-height:11px;font-size:7.6px;color:#3f3f3f;font-family:'Liberation Sans', sans-serif;transform:scaleX(1.000);">K</div>
<div style="position:absolute;left:445.50px;top:122.50px;width:1.00px;height:11.00px;background:#dbdbdb;"></div>
<div class="t c" style="left:301.5px;top:122px;height:11px;line-height:11px;font-size:7.6px;color:#3f3f3f;font-family:'Liberation Sans', sans-serif;transform:scaleX(1.000);">L</div>
<div style="position:absolute;left:456.50px;top:122.50px;width:1.00px;height:11.00px;background:#dbdbdb;"></div>
<div class="t c" style="left:329.8px;top:122px;height:11px;line-height:11px;font-size:7.6px;color:#3f3f3f;font-family:'Liberation Sans', sans-serif;transform:scaleX(1.000);">M</div>
<div style="position:absolute;left:501.50px;top:122.50px;width:1.00px;height:11.00px;background:#dbdbdb;"></div>
<div class="t c" style="left:374.9px;top:122px;height:11px;line-height:11px;font-size:7.6px;color:#3f3f3f;font-family:'Liberation Sans', sans-serif;transform:scaleX(1.000);">N</div>
<div style="position:absolute;left:546.50px;top:122.50px;width:1.00px;height:11.00px;background:#dbdbdb;"></div>
<div class="t c" style="left:419.9px;top:122px;height:11px;line-height:11px;font-size:7.6px;color:#3f3f3f;font-family:'Liberation Sans', sans-serif;transform:scaleX(1.000);">O</div>
<div style="position:absolute;left:591.50px;top:122.50px;width:1.00px;height:11.00px;background:#dbdbdb;"></div>
<div class="t c" style="left:448.5px;top:122px;height:11px;line-height:11px;font-size:7.6px;color:#3f3f3f;font-family:'Liberation Sans', sans-serif;transform:scaleX(1.000);">P</div>
<div style="position:absolute;left:603.50px;top:122.50px;width:1.00px;height:11.00px;background:#dbdbdb;"></div>
<div class="t c" style="left:477.1px;top:122px;height:11px;line-height:11px;font-size:7.6px;color:#3f3f3f;font-family:'Liberation Sans', sans-serif;transform:scaleX(1.000);">Q</div>
<div style="position:absolute;left:649.50px;top:122.50px;width:1.00px;height:11.00px;background:#dbdbdb;"></div>
<div class="t c" style="left:522.3px;top:122px;height:11px;line-height:11px;font-size:7.6px;color:#3f3f3f;font-family:'Liberation Sans', sans-serif;transform:scaleX(1.000);">R</div>
<div style="position:absolute;left:694.50px;top:122.50px;width:1.00px;height:11.00px;background:#dbdbdb;"></div>
<div class="t c" style="left:567.5px;top:122px;height:11px;line-height:11px;font-size:7.6px;color:#3f3f3f;font-family:'Liberation Sans', sans-serif;transform:scaleX(1.000);">S</div>
<div style="position:absolute;left:739.50px;top:122.50px;width:1.00px;height:11.00px;background:#dbdbdb;"></div>
<div class="t c" style="left:612.6px;top:122px;height:11px;line-height:11px;font-size:7.6px;color:#3f3f3f;font-family:'Liberation Sans', sans-serif;transform:scaleX(1.000);">T</div>
<div style="position:absolute;left:784.50px;top:122.50px;width:1.00px;height:11.00px;background:#dbdbdb;"></div>
<div class="t c" style="left:657.8px;top:122px;height:11px;line-height:11px;font-size:7.6px;color:#3f3f3f;font-family:'Liberation Sans', sans-serif;transform:scaleX(1.000);">U</div>
<div style="position:absolute;left:829.50px;top:122.50px;width:1.00px;height:11.00px;background:#dbdbdb;"></div>
<div class="t c" style="left:702.9px;top:122px;height:11px;line-height:11px;font-size:7.6px;color:#3f3f3f;font-family:'Liberation Sans', sans-serif;transform:scaleX(1.000);">V</div>
<div style="position:absolute;left:875.50px;top:122.50px;width:1.00px;height:11.00px;background:#dbdbdb;"></div>
<div class="t c" style="left:748.0px;top:122px;height:11px;line-height:11px;font-size:7.6px;color:#3f3f3f;font-family:'Liberation Sans', sans-serif;transform:scaleX(1.000);">W</div>
<div style="position:absolute;left:920.50px;top:122.50px;width:1.00px;height:11.00px;background:#dbdbdb;"></div>
<div class="t c" style="left:793.2px;top:122px;height:11px;line-height:11px;font-size:7.6px;color:#3f3f3f;font-family:'Liberation Sans', sans-serif;transform:scaleX(1.000);">X</div>
<div style="position:absolute;left:965.50px;top:122.50px;width:1.00px;height:11.00px;background:#dbdbdb;"></div>
<div class="t c" style="left:838.4px;top:122px;height:11px;line-height:11px;font-size:7.6px;color:#3f3f3f;font-family:'Liberation Sans', sans-serif;transform:scaleX(1.000);">Y</div>
<svg style="left:3.50px;top:123.50px;" width="11" height="9" viewBox="0 0 11 9"><path d="M10 0.5 V8.5 H1 Z" fill="#d6d6d6"/></svg>
<div style="position:absolute;left:0.00px;top:134.00px;width:16.00px;height:457.50px;background:#f2f2f2;border-right:1px solid #cfcfcf;"></div>
<div style="position:absolute;left:0;top:134px;width:16px;height:6px;overflow:hidden;"><div style="position:absolute;left:0;top:-3.4px;width:15.5px;text-align:center;font-family:'Liberation Sans', sans-serif;font-size:6.8px;color:#444;line-height:8px;">1</div></div>
<div style="position:absolute;left:0.00px;top:141.10px;width:15.50px;height:1.00px;background:#dadada;"></div>
<div style="position:absolute;left:-0.40px;top:137.30px;width:16.00px;height:20.00px;line-height:20.00px;font-family:'Liberation Sans', sans-serif;font-size:7.2px;font-weight:normal;text-align:center;color:#444;white-space:nowrap;">2</div>
<div style="position:absolute;left:0.00px;top:152.30px;width:15.50px;height:1.00px;background:#dadada;"></div>
<div style="position:absolute;left:-0.40px;top:147.90px;width:16.00px;height:20.00px;line-height:20.00px;font-family:'Liberation Sans', sans-serif;font-size:7.2px;font-weight:normal;text-align:center;color:#444;white-space:nowrap;">3</div>
<div style="position:absolute;left:0.00px;top:163.10px;width:15.50px;height:1.00px;background:#dadada;"></div>
<div style="position:absolute;left:-0.40px;top:158.90px;width:16.00px;height:20.00px;line-height:20.00px;font-family:'Liberation Sans', sans-serif;font-size:7.2px;font-weight:normal;text-align:center;color:#444;white-space:nowrap;">4</div>
<div style="position:absolute;left:0.00px;top:173.90px;width:15.50px;height:1.00px;background:#dadada;"></div>
<div style="position:absolute;left:-0.40px;top:169.50px;width:16.00px;height:20.00px;line-height:20.00px;font-family:'Liberation Sans', sans-serif;font-size:7.2px;font-weight:normal;text-align:center;color:#444;white-space:nowrap;">5</div>
<div style="position:absolute;left:0.00px;top:184.60px;width:15.50px;height:1.00px;background:#dadada;"></div>
<div style="position:absolute;left:-0.40px;top:180.30px;width:16.00px;height:20.00px;line-height:20.00px;font-family:'Liberation Sans', sans-serif;font-size:7.2px;font-weight:normal;text-align:center;color:#444;white-space:nowrap;">6</div>
<div style="position:absolute;left:0.00px;top:196.00px;width:15.50px;height:1.00px;background:#dadada;"></div>
<div style="position:absolute;left:-0.40px;top:192.30px;width:16.00px;height:20.00px;line-height:20.00px;font-family:'Liberation Sans', sans-serif;font-size:7.2px;font-weight:normal;text-align:center;color:#444;white-space:nowrap;">7</div>
<div style="position:absolute;left:0.00px;top:208.00px;width:15.50px;height:1.00px;background:#dadada;"></div>
<div style="position:absolute;left:-0.40px;top:204.30px;width:16.00px;height:20.00px;line-height:20.00px;font-family:'Liberation Sans', sans-serif;font-size:7.2px;font-weight:normal;text-align:center;color:#444;white-space:nowrap;">8</div>
<div style="position:absolute;left:0.00px;top:219.80px;width:15.50px;height:1.00px;background:#dadada;"></div>
<div style="position:absolute;left:-0.40px;top:215.90px;width:16.00px;height:20.00px;line-height:20.00px;font-family:'Liberation Sans', sans-serif;font-size:7.2px;font-weight:normal;text-align:center;color:#444;white-space:nowrap;">9</div>
<div style="position:absolute;left:0.00px;top:231.80px;width:15.50px;height:1.00px;background:#dadada;"></div>
<div style="position:absolute;left:-0.40px;top:228.30px;width:16.00px;height:20.00px;line-height:20.00px;font-family:'Liberation Sans', sans-serif;font-size:7.2px;font-weight:normal;text-align:center;color:#444;white-space:nowrap;">10</div>
<div style="position:absolute;left:0.00px;top:243.80px;width:15.50px;height:1.00px;background:#dadada;"></div>
<div style="position:absolute;left:-0.40px;top:239.90px;width:16.00px;height:20.00px;line-height:20.00px;font-family:'Liberation Sans', sans-serif;font-size:7.2px;font-weight:normal;text-align:center;color:#444;white-space:nowrap;">11</div>
<div style="position:absolute;left:0.00px;top:255.00px;width:15.50px;height:1.00px;background:#dadada;"></div>
<div style="position:absolute;left:-0.40px;top:250.70px;width:16.00px;height:20.00px;line-height:20.00px;font-family:'Liberation Sans', sans-serif;font-size:7.2px;font-weight:normal;text-align:center;color:#444;white-space:nowrap;">12</div>
<div style="position:absolute;left:0.00px;top:266.00px;width:15.50px;height:1.00px;background:#dadada;"></div>
<div style="position:absolute;left:-0.40px;top:261.90px;width:16.00px;height:20.00px;line-height:20.00px;font-family:'Liberation Sans', sans-serif;font-size:7.2px;font-weight:normal;text-align:center;color:#444;white-space:nowrap;">13</div>
<div style="position:absolute;left:0.00px;top:277.10px;width:15.50px;height:1.00px;background:#dadada;"></div>
<div style="position:absolute;left:-0.40px;top:272.90px;width:16.00px;height:20.00px;line-height:20.00px;font-family:'Liberation Sans', sans-serif;font-size:7.2px;font-weight:normal;text-align:center;color:#444;white-space:nowrap;">14</div>
<div style="position:absolute;left:0.00px;top:288.10px;width:15.50px;height:1.00px;background:#dadada;"></div>
<div style="position:absolute;left:-0.40px;top:283.90px;width:16.00px;height:20.00px;line-height:20.00px;font-family:'Liberation Sans', sans-serif;font-size:7.2px;font-weight:normal;text-align:center;color:#444;white-space:nowrap;">15</div>
<div style="position:absolute;left:0.00px;top:299.00px;width:15.50px;height:1.00px;background:#dadada;"></div>
<div style="position:absolute;left:-0.40px;top:294.70px;width:16.00px;height:20.00px;line-height:20.00px;font-family:'Liberation Sans', sans-serif;font-size:7.2px;font-weight:normal;text-align:center;color:#444;white-space:nowrap;">16</div>
<div style="position:absolute;left:0.00px;top:309.90px;width:15.50px;height:1.00px;background:#dadada;"></div>
<div style="position:absolute;left:-0.40px;top:305.70px;width:16.00px;height:20.00px;line-height:20.00px;font-family:'Liberation Sans', sans-serif;font-size:7.2px;font-weight:normal;text-align:center;color:#444;white-space:nowrap;">17</div>
<div style="position:absolute;left:0.00px;top:321.00px;width:15.50px;height:1.00px;background:#dadada;"></div>
<div style="position:absolute;left:-0.40px;top:316.90px;width:16.00px;height:20.00px;line-height:20.00px;font-family:'Liberation Sans', sans-serif;font-size:7.2px;font-weight:normal;text-align:center;color:#444;white-space:nowrap;">18</div>
<div style="position:absolute;left:0.00px;top:332.10px;width:15.50px;height:1.00px;background:#dadada;"></div>
<div style="position:absolute;left:-0.40px;top:327.90px;width:16.00px;height:20.00px;line-height:20.00px;font-family:'Liberation Sans', sans-serif;font-size:7.2px;font-weight:normal;text-align:center;color:#444;white-space:nowrap;">19</div>
<div style="position:absolute;left:0.00px;top:343.10px;width:15.50px;height:1.00px;background:#dadada;"></div>
<div style="position:absolute;left:-0.40px;top:338.90px;width:16.00px;height:20.00px;line-height:20.00px;font-family:'Liberation Sans', sans-serif;font-size:7.2px;font-weight:normal;text-align:center;color:#444;white-space:nowrap;">20</div>
<div style="position:absolute;left:0.00px;top:354.10px;width:15.50px;height:1.00px;background:#dadada;"></div>
<div style="position:absolute;left:-0.40px;top:349.90px;width:16.00px;height:20.00px;line-height:20.00px;font-family:'Liberation Sans', sans-serif;font-size:7.2px;font-weight:normal;text-align:center;color:#444;white-space:nowrap;">21</div>
<div style="position:absolute;left:0.00px;top:365.55px;width:15.50px;height:1.00px;background:#dadada;"></div>
<div style="position:absolute;left:-0.40px;top:361.80px;width:16.00px;height:20.00px;line-height:20.00px;font-family:'Liberation Sans', sans-serif;font-size:7.2px;font-weight:normal;text-align:center;color:#444;white-space:nowrap;">22</div>
<div style="position:absolute;left:0.00px;top:377.25px;width:15.50px;height:1.00px;background:#dadada;"></div>
<div style="position:absolute;left:-0.40px;top:373.30px;width:16.00px;height:20.00px;line-height:20.00px;font-family:'Liberation Sans', sans-serif;font-size:7.2px;font-weight:normal;text-align:center;color:#444;white-space:nowrap;">23</div>
<div style="position:absolute;left:0.00px;top:388.60px;width:15.50px;height:1.00px;background:#dadada;"></div>
<div style="position:absolute;left:-0.40px;top:384.50px;width:16.00px;height:20.00px;line-height:20.00px;font-family:'Liberation Sans', sans-serif;font-size:7.2px;font-weight:normal;text-align:center;color:#444;white-space:nowrap;">24</div>
<div style="position:absolute;left:0.00px;top:399.60px;width:15.50px;height:1.00px;background:#dadada;"></div>
<div style="position:absolute;left:-0.40px;top:395.30px;width:16.00px;height:20.00px;line-height:20.00px;font-family:'Liberation Sans', sans-serif;font-size:7.2px;font-weight:normal;text-align:center;color:#444;white-space:nowrap;">25</div>
<div style="position:absolute;left:0.00px;top:410.80px;width:15.50px;height:1.00px;background:#dadada;"></div>
<div style="position:absolute;left:-0.40px;top:406.90px;width:16.00px;height:20.00px;line-height:20.00px;font-family:'Liberation Sans', sans-serif;font-size:7.2px;font-weight:normal;text-align:center;color:#444;white-space:nowrap;">26</div>
<div style="position:absolute;left:0.00px;top:422.40px;width:15.50px;height:1.00px;background:#dadada;"></div>
<div style="position:absolute;left:-0.40px;top:418.50px;width:16.00px;height:20.00px;line-height:20.00px;font-family:'Liberation Sans', sans-serif;font-size:7.2px;font-weight:normal;text-align:center;color:#444;white-space:nowrap;">27</div>
<div style="position:absolute;left:0.00px;top:434.10px;width:15.50px;height:1.00px;background:#dadada;"></div>
<div style="position:absolute;left:-0.40px;top:430.30px;width:16.00px;height:20.00px;line-height:20.00px;font-family:'Liberation Sans', sans-serif;font-size:7.2px;font-weight:normal;text-align:center;color:#444;white-space:nowrap;">28</div>
<div style="position:absolute;left:0.00px;top:445.80px;width:15.50px;height:1.00px;background:#dadada;"></div>
<div style="position:absolute;left:-0.40px;top:441.90px;width:16.00px;height:20.00px;line-height:20.00px;font-family:'Liberation Sans', sans-serif;font-size:7.2px;font-weight:normal;text-align:center;color:#444;white-space:nowrap;">29</div>
<div style="position:absolute;left:0.00px;top:457.50px;width:15.50px;height:1.00px;background:#dadada;"></div>
<div style="position:absolute;left:-0.40px;top:453.70px;width:16.00px;height:20.00px;line-height:20.00px;font-family:'Liberation Sans', sans-serif;font-size:7.2px;font-weight:normal;text-align:center;color:#444;white-space:nowrap;">30</div>
<div style="position:absolute;left:0.00px;top:469.20px;width:15.50px;height:1.00px;background:#dadada;"></div>
<div style="position:absolute;left:-0.40px;top:465.30px;width:16.00px;height:20.00px;line-height:20.00px;font-family:'Liberation Sans', sans-serif;font-size:7.2px;font-weight:normal;text-align:center;color:#444;white-space:nowrap;">31</div>
<div style="position:absolute;left:0.00px;top:480.85px;width:15.50px;height:1.00px;background:#dadada;"></div>
<div style="position:absolute;left:-0.40px;top:477.00px;width:16.00px;height:20.00px;line-height:20.00px;font-family:'Liberation Sans', sans-serif;font-size:7.2px;font-weight:normal;text-align:center;color:#444;white-space:nowrap;">32</div>
<div style="position:absolute;left:0.00px;top:492.55px;width:15.50px;height:1.00px;background:#dadada;"></div>
<div style="position:absolute;left:-0.40px;top:488.70px;width:16.00px;height:20.00px;line-height:20.00px;font-family:'Liberation Sans', sans-serif;font-size:7.2px;font-weight:normal;text-align:center;color:#444;white-space:nowrap;">33</div>
<div style="position:absolute;left:0.00px;top:504.30px;width:15.50px;height:1.00px;background:#dadada;"></div>
<div style="position:absolute;left:-0.40px;top:500.50px;width:16.00px;height:20.00px;line-height:20.00px;font-family:'Liberation Sans', sans-serif;font-size:7.2px;font-weight:normal;text-align:center;color:#2d6a3e;white-space:nowrap;">34</div>
<div style="position:absolute;left:0.00px;top:516.05px;width:15.50px;height:1.00px;background:#dadada;"></div>
<div style="position:absolute;left:-0.40px;top:512.20px;width:16.00px;height:20.00px;line-height:20.00px;font-family:'Liberation Sans', sans-serif;font-size:7.2px;font-weight:normal;text-align:center;color:#444;white-space:nowrap;">35</div>
<div style="position:absolute;left:0.00px;top:527.80px;width:15.50px;height:1.00px;background:#dadada;"></div>
<div style="position:absolute;left:-0.40px;top:524.00px;width:16.00px;height:20.00px;line-height:20.00px;font-family:'Liberation Sans', sans-serif;font-size:7.2px;font-weight:normal;text-align:center;color:#444;white-space:nowrap;">36</div>
<div style="position:absolute;left:0.00px;top:539.55px;width:15.50px;height:1.00px;background:#dadada;"></div>
<div style="position:absolute;left:-0.40px;top:535.70px;width:16.00px;height:20.00px;line-height:20.00px;font-family:'Liberation Sans', sans-serif;font-size:7.2px;font-weight:normal;text-align:center;color:#444;white-space:nowrap;">37</div>
<div style="position:absolute;left:0.00px;top:551.30px;width:15.50px;height:1.00px;background:#dadada;"></div>
<div style="position:absolute;left:-0.40px;top:547.50px;width:16.00px;height:20.00px;line-height:20.00px;font-family:'Liberation Sans', sans-serif;font-size:7.2px;font-weight:normal;text-align:center;color:#444;white-space:nowrap;">38</div>
<div style="position:absolute;left:0.00px;top:563.05px;width:15.50px;height:1.00px;background:#dadada;"></div>
<div style="position:absolute;left:-0.40px;top:559.20px;width:16.00px;height:20.00px;line-height:20.00px;font-family:'Liberation Sans', sans-serif;font-size:7.2px;font-weight:normal;text-align:center;color:#444;white-space:nowrap;">39</div>
<div style="position:absolute;left:0.00px;top:574.80px;width:15.50px;height:1.00px;background:#dadada;"></div>
<div style="position:absolute;left:-0.40px;top:571.00px;width:16.00px;height:20.00px;line-height:20.00px;font-family:'Liberation Sans', sans-serif;font-size:7.2px;font-weight:normal;text-align:center;color:#444;white-space:nowrap;">40</div>
<div style="position:absolute;left:0.00px;top:586.55px;width:15.50px;height:1.00px;background:#dadada;"></div>
<div style="position:absolute;left:14.50px;top:504.60px;width:1.60px;height:11.40px;background:#2d6a3e;"></div>
<div style="position:absolute;left:162.40px;top:140.40px;width:136.20px;height:55.80px;background:#fff;border:1px solid #d3cdd0;box-shadow:inset 0 0 0 1.5px #fff, inset 0 0 0 2.2px #ece6e9;"></div>
<div style="position:absolute;left:309.60px;top:140.40px;width:136.20px;height:55.80px;background:#fff;border:1px solid #d3cdd0;box-shadow:inset 0 0 0 1.5px #fff, inset 0 0 0 2.2px #ece6e9;"></div>
<div style="position:absolute;left:457.00px;top:140.40px;width:136.20px;height:55.80px;background:#fff;border:1px solid #d3cdd0;box-shadow:inset 0 0 0 1.5px #fff, inset 0 0 0 2.2px #ece6e9;"></div>
<div class="t c" style="left:-54.4px;top:151px;height:11px;line-height:11px;font-size:7.8px;font-weight:bold;transform:scaleX(0.936);-webkit-text-stroke:0.25px #161616;">MEIN BUDGETMONAT</div>
<div class="t c" style="left:-54.4px;top:161px;height:22px;line-height:22px;font-size:17.4px;font-weight:bold;transform:scaleX(0.845);-webkit-text-stroke:0.3px #161616;">JULI</div>
<div class="t c" style="left:81.0px;top:151px;height:11px;line-height:11px;font-size:7.8px;font-weight:bold;transform:scaleX(0.903);-webkit-text-stroke:0.25px #161616;">EINNAHMEN</div>
<div class="t c" style="left:81.0px;top:162px;height:21px;line-height:21px;font-size:16.6px;font-weight:bold;transform:scaleX(0.936);-webkit-text-stroke:0.3px #161616;">2.863,17 €</div>
<div class="t c" style="left:227.8px;top:151px;height:11px;line-height:11px;font-size:7.8px;font-weight:bold;transform:scaleX(0.946);-webkit-text-stroke:0.25px #161616;">AUSGABEN</div>
<div class="t c" style="left:227.8px;top:162px;height:21px;line-height:21px;font-size:16.6px;font-weight:bold;transform:scaleX(0.936);-webkit-text-stroke:0.3px #161616;">2.027,91 €</div>
<div class="t c" style="left:375.0px;top:151px;height:11px;line-height:11px;font-size:7.8px;font-weight:bold;transform:scaleX(0.899);-webkit-text-stroke:0.25px #161616;">ÜBRIG</div>
<div class="t c" style="left:375.0px;top:162px;height:21px;line-height:21px;font-size:16.6px;font-weight:bold;transform:scaleX(0.929);-webkit-text-stroke:0.3px #161616;">835,26 €</div>
<div style="position:absolute;left:25.60px;top:205.80px;width:273.00px;height:127.00px;background:#fff;border:1px solid #dad6d8;"></div>
<div class="t c" style="left:11.4px;top:210px;height:12px;line-height:12px;font-size:9.0px;font-weight:bold;color:#3c3c3c;transform:scaleX(0.899);">JAHRESÜBERSICHT</div>
<svg style="left:0.00px;top:0.00px;" width="1000" height="625" viewBox="0 0 1000 625"><rect x="47" y="298.95" width="244" height="0.9" fill="#d4d4d4"/><rect x="47" y="290.20" width="244" height="0.9" fill="#d4d4d4"/><rect x="47" y="281.45" width="244" height="0.9" fill="#d4d4d4"/><rect x="47" y="272.70" width="244" height="0.9" fill="#d4d4d4"/><rect x="47" y="263.95" width="244" height="0.9" fill="#d4d4d4"/><rect x="47" y="255.20" width="244" height="0.9" fill="#d4d4d4"/><rect x="47" y="246.45" width="244" height="0.9" fill="#d4d4d4"/><rect x="47" y="237.70" width="244" height="0.9" fill="#d4d4d4"/><rect x="47" y="228.95" width="244" height="0.9" fill="#d4d4d4"/><rect x="54.60" y="249.30" width="4.7" height="50.10" fill="#c99ab3"/><rect x="59.60" y="283.19" width="4.6" height="16.21" fill="#e8b5d0"/><rect x="74.73" y="236.19" width="4.7" height="63.21" fill="#c99ab3"/><rect x="79.73" y="271.47" width="4.6" height="27.93" fill="#e8b5d0"/><rect x="94.86" y="260.93" width="4.7" height="38.47" fill="#c99ab3"/><rect x="99.86" y="265.52" width="4.6" height="33.88" fill="#e8b5d0"/><rect x="114.99" y="260.29" width="4.7" height="39.11" fill="#c99ab3"/><rect x="119.99" y="274.20" width="4.6" height="25.20" fill="#e8b5d0"/><polyline points="56.50,265.52 79.63,264.12 99.76,294.81 119.89,285.57 140.02,299.40 160.15,299.40 180.28,299.40 200.41,299.40 220.54,299.40 240.67,299.40 260.80,299.40 280.93,299.40" fill="none" stroke="#d4a0c0" stroke-width="1.3" stroke-linejoin="round"/></svg>
<div style="position:absolute;left:13.40px;top:289.50px;width:30.00px;height:20.00px;line-height:20.00px;font-family:'Liberation Sans', sans-serif;font-size:6.0px;font-weight:normal;text-align:right;color:#505050;white-space:nowrap;">0</div>
<div style="position:absolute;left:13.40px;top:280.75px;width:30.00px;height:20.00px;line-height:20.00px;font-family:'Liberation Sans', sans-serif;font-size:6.0px;font-weight:normal;text-align:right;color:#505050;white-space:nowrap;">500</div>
<div style="position:absolute;left:13.40px;top:272.00px;width:30.00px;height:20.00px;line-height:20.00px;font-family:'Liberation Sans', sans-serif;font-size:6.0px;font-weight:normal;text-align:right;color:#505050;white-space:nowrap;">1000</div>
<div style="position:absolute;left:13.40px;top:263.25px;width:30.00px;height:20.00px;line-height:20.00px;font-family:'Liberation Sans', sans-serif;font-size:6.0px;font-weight:normal;text-align:right;color:#505050;white-space:nowrap;">1500</div>
<div style="position:absolute;left:13.40px;top:254.50px;width:30.00px;height:20.00px;line-height:20.00px;font-family:'Liberation Sans', sans-serif;font-size:6.0px;font-weight:normal;text-align:right;color:#505050;white-space:nowrap;">2000</div>
<div style="position:absolute;left:13.40px;top:245.75px;width:30.00px;height:20.00px;line-height:20.00px;font-family:'Liberation Sans', sans-serif;font-size:6.0px;font-weight:normal;text-align:right;color:#505050;white-space:nowrap;">2500</div>
<div style="position:absolute;left:13.40px;top:237.00px;width:30.00px;height:20.00px;line-height:20.00px;font-family:'Liberation Sans', sans-serif;font-size:6.0px;font-weight:normal;text-align:right;color:#505050;white-space:nowrap;">3000</div>
<div style="position:absolute;left:13.40px;top:228.25px;width:30.00px;height:20.00px;line-height:20.00px;font-family:'Liberation Sans', sans-serif;font-size:6.0px;font-weight:normal;text-align:right;color:#505050;white-space:nowrap;">3500</div>
<div style="position:absolute;left:13.40px;top:219.50px;width:30.00px;height:20.00px;line-height:20.00px;font-family:'Liberation Sans', sans-serif;font-size:6.0px;font-weight:normal;text-align:right;color:#505050;white-space:nowrap;">4000</div>
<div style="position:absolute;left:-2.10px;top:302.90px;width:60px;height:8px;line-height:8px;font-family:'Liberation Sans', sans-serif;font-size:5.9px;color:#4c4c4c;text-align:right;white-space:nowrap;transform:rotate(-45deg);transform-origin:right center;">Januar</div>
<div style="position:absolute;left:18.03px;top:302.90px;width:60px;height:8px;line-height:8px;font-family:'Liberation Sans', sans-serif;font-size:5.9px;color:#4c4c4c;text-align:right;white-space:nowrap;transform:rotate(-45deg);transform-origin:right center;">Februar</div>
<div style="position:absolute;left:38.16px;top:302.90px;width:60px;height:8px;line-height:8px;font-family:'Liberation Sans', sans-serif;font-size:5.9px;color:#4c4c4c;text-align:right;white-space:nowrap;transform:rotate(-45deg);transform-origin:right center;">März</div>
<div style="position:absolute;left:58.29px;top:302.90px;width:60px;height:8px;line-height:8px;font-family:'Liberation Sans', sans-serif;font-size:5.9px;color:#4c4c4c;text-align:right;white-space:nowrap;transform:rotate(-45deg);transform-origin:right center;">April</div>
<div style="position:absolute;left:78.42px;top:302.90px;width:60px;height:8px;line-height:8px;font-family:'Liberation Sans', sans-serif;font-size:5.9px;color:#4c4c4c;text-align:right;white-space:nowrap;transform:rotate(-45deg);transform-origin:right center;">Mai</div>
<div style="position:absolute;left:98.55px;top:302.90px;width:60px;height:8px;line-height:8px;font-family:'Liberation Sans', sans-serif;font-size:5.9px;color:#4c4c4c;text-align:right;white-space:nowrap;transform:rotate(-45deg);transform-origin:right center;">Juni</div>
<div style="position:absolute;left:118.68px;top:302.90px;width:60px;height:8px;line-height:8px;font-family:'Liberation Sans', sans-serif;font-size:5.9px;color:#4c4c4c;text-align:right;white-space:nowrap;transform:rotate(-45deg);transform-origin:right center;">Juli</div>
<div style="position:absolute;left:138.81px;top:302.90px;width:60px;height:8px;line-height:8px;font-family:'Liberation Sans', sans-serif;font-size:5.9px;color:#4c4c4c;text-align:right;white-space:nowrap;transform:rotate(-45deg);transform-origin:right center;">August</div>
<div style="position:absolute;left:158.94px;top:302.90px;width:60px;height:8px;line-height:8px;font-family:'Liberation Sans', sans-serif;font-size:5.9px;color:#4c4c4c;text-align:right;white-space:nowrap;transform:rotate(-45deg);transform-origin:right center;">September</div>
<div style="position:absolute;left:179.07px;top:302.90px;width:60px;height:8px;line-height:8px;font-family:'Liberation Sans', sans-serif;font-size:5.9px;color:#4c4c4c;text-align:right;white-space:nowrap;transform:rotate(-45deg);transform-origin:right center;">Oktober</div>
<div style="position:absolute;left:199.20px;top:302.90px;width:60px;height:8px;line-height:8px;font-family:'Liberation Sans', sans-serif;font-size:5.9px;color:#4c4c4c;text-align:right;white-space:nowrap;transform:rotate(-45deg);transform-origin:right center;">November</div>
<div style="position:absolute;left:219.33px;top:302.90px;width:60px;height:8px;line-height:8px;font-family:'Liberation Sans', sans-serif;font-size:5.9px;color:#4c4c4c;text-align:right;white-space:nowrap;transform:rotate(-45deg);transform-origin:right center;">Dezember</div>
<div style="position:absolute;left:309.60px;top:205.80px;width:282.20px;height:127.00px;background:#fff;border:1px solid #dad6d8;"></div>
<svg style="left:0.00px;top:0.00px;" width="1000" height="625" viewBox="0 0 1000 625"><defs><radialGradient id="pg" cx="426" cy="269" r="47" gradientUnits="userSpaceOnUse"><stop offset="0" stop-color="#fff" stop-opacity="0.10"/><stop offset="0.7" stop-color="#fff" stop-opacity="0"/><stop offset="1" stop-color="#704060" stop-opacity="0.06"/></radialGradient></defs><path d="M426 269.1 L426.00 222.00 A47.1 47.1 0 0 1 473.00 272.18 Z" fill="#ecd0dc" stroke="#fff" stroke-width="1.1" stroke-linejoin="round"/><path d="M426 269.1 L473.00 272.18 A47.1 47.1 0 0 1 388.77 297.95 Z" fill="#e6b2d0" stroke="#fff" stroke-width="1.1" stroke-linejoin="round"/><path d="M426 269.1 L388.77 297.95 A47.1 47.1 0 0 1 380.51 281.31 Z" fill="#e3a8cb" stroke="#fff" stroke-width="1.1" stroke-linejoin="round"/><path d="M426 269.1 L380.51 281.31 A47.1 47.1 0 0 1 426.00 222.00 Z" fill="#cfa3ba" stroke="#fff" stroke-width="1.1" stroke-linejoin="round"/><circle cx="426" cy="269.1" r="47.1" fill="url(#pg)"/><path d="M370.5 221.2 H373.5 L388 239.5" stroke="#8c8c8c" stroke-width="0.7" fill="none"/><path d="M471 231.2 H466.5 L460.5 236.5" stroke="#8c8c8c" stroke-width="0.7" fill="none"/><path d="M488.5 259.6 H485 L474 271.5" stroke="#8c8c8c" stroke-width="0.7" fill="none"/><path d="M383 291.5 V302.6" stroke="#8c8c8c" stroke-width="0.7" fill="none"/><path d="M459 326.2 H455.5 L440 314.5" stroke="#8c8c8c" stroke-width="0.7" fill="none"/></svg>
<div style="position:absolute;left:318.50px;top:210.90px;width:50.00px;height:20.00px;line-height:20.00px;font-family:'Liberation Sans', sans-serif;font-size:5.6px;font-weight:normal;text-align:right;color:#262626;white-space:nowrap;">835,26 €</div>
<div style="position:absolute;left:472.80px;top:220.90px;width:50.00px;height:20.00px;line-height:20.00px;font-family:'Liberation Sans', sans-serif;font-size:5.6px;font-weight:normal;text-align:left;color:#262626;white-space:nowrap;">745,65 €</div>
<div style="position:absolute;left:493.60px;top:249.30px;width:50.00px;height:20.00px;line-height:20.00px;font-family:'Liberation Sans', sans-serif;font-size:5.6px;font-weight:normal;text-align:left;color:#262626;white-space:nowrap;white-space:pre;">-  €</div>
<div style="position:absolute;left:335.00px;top:296.90px;width:50.00px;height:20.00px;line-height:20.00px;font-family:'Liberation Sans', sans-serif;font-size:5.6px;font-weight:normal;text-align:right;color:#262626;white-space:nowrap;">181,00 €</div>
<div style="position:absolute;left:460.50px;top:316.00px;width:50.00px;height:20.00px;line-height:20.00px;font-family:'Liberation Sans', sans-serif;font-size:5.6px;font-weight:normal;text-align:left;color:#262626;white-space:nowrap;">1101,26</div>
<div style="position:absolute;left:545.40px;top:244.00px;width:2.40px;height:2.40px;background:#e6c8d5;"></div>
<div style="position:absolute;left:549.60px;top:235.60px;width:60.00px;height:20.00px;line-height:20.00px;font-family:'Liberation Sans', sans-serif;font-size:5.6px;font-weight:normal;text-align:left;color:#444;white-space:nowrap;">Fixkosten</div>
<div style="position:absolute;left:545.40px;top:256.00px;width:2.40px;height:2.40px;background:#d9c0cb;"></div>
<div style="position:absolute;left:549.60px;top:247.45px;width:60.00px;height:20.00px;line-height:20.00px;font-family:'Liberation Sans', sans-serif;font-size:5.6px;font-weight:normal;text-align:left;color:#444;white-space:nowrap;">Sparen</div>
<div style="position:absolute;left:545.40px;top:268.00px;width:2.40px;height:2.40px;background:#e0aecb;"></div>
<div style="position:absolute;left:549.60px;top:259.30px;width:60.00px;height:20.00px;line-height:20.00px;font-family:'Liberation Sans', sans-serif;font-size:5.6px;font-weight:normal;text-align:left;color:#444;white-space:nowrap;">Variablen</div>
<div style="position:absolute;left:545.40px;top:280.00px;width:2.40px;height:2.40px;background:#dea3c6;"></div>
<div style="position:absolute;left:549.60px;top:271.15px;width:60.00px;height:20.00px;line-height:20.00px;font-family:'Liberation Sans', sans-serif;font-size:5.6px;font-weight:normal;text-align:left;color:#444;white-space:nowrap;">Sinking Funds</div>
<div style="position:absolute;left:545.40px;top:292.00px;width:2.40px;height:2.40px;background:#c697b0;"></div>
<div style="position:absolute;left:549.60px;top:283.00px;width:60.00px;height:20.00px;line-height:20.00px;font-family:'Liberation Sans', sans-serif;font-size:5.6px;font-weight:normal;text-align:left;color:#444;white-space:nowrap;">Übrig</div>
<div style="position:absolute;left:27.20px;top:343.00px;width:566.00px;height:22.60px;background:#e4b6c9;"></div>
<div class="t c" style="left:160.3px;top:349px;height:11px;line-height:11px;font-size:8.3px;font-weight:bold;transform:scaleX(1.055);-webkit-text-stroke:0.2px #161616;">BUGDETÜBERSICHT</div>
<div style="position:absolute;left:27.20px;top:376.60px;width:271.20px;height:214.90px;background:#fff;border:1px solid #d6d0d3;border-bottom:none;"></div>
<div class="t c" style="left:13.3px;top:381px;height:12px;line-height:12px;font-size:9.2px;font-weight:bold;transform:scaleX(0.955);-webkit-text-stroke:0.15px #161616;">FIXKOSTEN</div>
<div style="position:absolute;left:27.20px;top:399.00px;width:271.20px;height:10.60px;background:#e4b6c9;"></div>
<div class="t c" style="left:-100.5px;top:399px;height:11px;line-height:11px;font-size:7.9px;font-weight:bold;transform:scaleX(0.900);-webkit-text-stroke:0.2px #161616;">DATUM</div>
<div class="t c" style="left:-9.5px;top:398px;height:11px;line-height:11px;font-size:7.9px;font-weight:bold;transform:scaleX(0.900);-webkit-text-stroke:0.2px #161616;">FIXKOSTEN</div>
<div class="t c" style="left:80.6px;top:399px;height:11px;line-height:11px;font-size:7.9px;font-weight:bold;transform:scaleX(0.900);-webkit-text-stroke:0.2px #161616;">BETRAG</div>
<div class="t c" style="left:126.0px;top:399px;height:11px;line-height:11px;font-size:7.9px;font-weight:bold;transform:scaleX(0.900);-webkit-text-stroke:0.2px #161616;">BEZAHLT</div>
<div style="position:absolute;left:27.20px;top:421.00px;width:271.20px;height:1.00px;background:#e0d4d9;"></div>
<div style="position:absolute;left:27.20px;top:433.00px;width:271.20px;height:1.00px;background:#e0d4d9;"></div>
<div style="position:absolute;left:27.20px;top:444.00px;width:271.20px;height:1.00px;background:#e0d4d9;"></div>
<div style="position:absolute;left:27.20px;top:456.00px;width:271.20px;height:1.00px;background:#e0d4d9;"></div>
<div style="position:absolute;left:27.20px;top:468.00px;width:271.20px;height:1.00px;background:#e0d4d9;"></div>
<div style="position:absolute;left:27.20px;top:480.00px;width:271.20px;height:1.00px;background:#e0d4d9;"></div>
<div style="position:absolute;left:27.20px;top:492.00px;width:271.20px;height:1.00px;background:#e0d4d9;"></div>
<div style="position:absolute;left:27.20px;top:503.00px;width:271.20px;height:1.00px;background:#e0d4d9;"></div>
<div style="position:absolute;left:27.20px;top:515.00px;width:271.20px;height:1.00px;background:#e0d4d9;"></div>
<div style="position:absolute;left:27.20px;top:527.00px;width:271.20px;height:1.00px;background:#e0d4d9;"></div>
<div style="position:absolute;left:27.20px;top:539.00px;width:271.20px;height:1.00px;background:#e0d4d9;"></div>
<div style="position:absolute;left:27.20px;top:550.00px;width:271.20px;height:1.00px;background:#e0d4d9;"></div>
<div style="position:absolute;left:27.20px;top:562.00px;width:271.20px;height:1.00px;background:#e0d4d9;"></div>
<div style="position:absolute;left:27.20px;top:574.00px;width:271.20px;height:1.00px;background:#e0d4d9;"></div>
<div style="position:absolute;left:27.20px;top:586.00px;width:271.20px;height:1.00px;background:#e0d4d9;"></div>
<div style="position:absolute;left:72.00px;top:409.60px;width:1.00px;height:181.90px;background:#e0d4d9;"></div>
<div style="position:absolute;left:207.00px;top:409.60px;width:1.00px;height:181.90px;background:#e0d4d9;"></div>
<div style="position:absolute;left:253.00px;top:409.60px;width:1.00px;height:181.90px;background:#e0d4d9;"></div>
<div class="t r" style="left:-228.8px;top:410px;height:12px;line-height:12px;font-size:9.0px;transform:scaleX(0.930);-webkit-text-stroke:0.3px #161616;">01.07.23</div>
<div class="t l" style="left:74.8px;top:410px;height:12px;line-height:12px;font-size:9.2px;transform:scaleX(1.020);-webkit-text-stroke:0.3px #161616;">Miete</div>
<div class="t r" style="left:-50.6px;top:410px;height:12px;line-height:12px;font-size:9.0px;transform:scaleX(1.000);-webkit-text-stroke:0.3px #161616;">425,00 €</div>
<div style="position:absolute;left:270.90px;top:411.29px;width:8.80px;height:8.80px;background:#fff;border:1px solid #2e2e2e;"></div>
<div class="t r" style="left:-228.8px;top:422px;height:12px;line-height:12px;font-size:9.0px;transform:scaleX(0.930);-webkit-text-stroke:0.3px #161616;">22.07.23</div>
<div class="t l" style="left:74.8px;top:422px;height:12px;line-height:12px;font-size:9.2px;transform:scaleX(1.020);-webkit-text-stroke:0.3px #161616;">iPhone</div>
<div class="t r" style="left:-50.6px;top:422px;height:12px;line-height:12px;font-size:9.0px;transform:scaleX(1.000);-webkit-text-stroke:0.3px #161616;">47,49 €</div>
<div style="position:absolute;left:270.90px;top:423.07px;width:8.80px;height:8.80px;background:#fff;border:1px solid #2e2e2e;"></div>
<div class="t r" style="left:-228.8px;top:433px;height:12px;line-height:12px;font-size:9.0px;transform:scaleX(0.930);-webkit-text-stroke:0.3px #161616;">28.07.23</div>
<div class="t l" style="left:74.8px;top:433px;height:12px;line-height:12px;font-size:9.2px;transform:scaleX(1.020);-webkit-text-stroke:0.3px #161616;">iPad</div>
<div class="t r" style="left:-50.6px;top:433px;height:12px;line-height:12px;font-size:9.0px;transform:scaleX(1.000);-webkit-text-stroke:0.3px #161616;">42,49 €</div>
<div style="position:absolute;left:270.90px;top:434.85px;width:8.80px;height:8.80px;background:#fff;border:1px solid #2e2e2e;"></div>
<div class="t r" style="left:-228.8px;top:445px;height:12px;line-height:12px;font-size:9.0px;transform:scaleX(0.930);-webkit-text-stroke:0.3px #161616;">06.07.23</div>
<div class="t l" style="left:74.8px;top:445px;height:12px;line-height:12px;font-size:9.2px;transform:scaleX(1.020);-webkit-text-stroke:0.3px #161616;">Spülmaschine</div>
<div class="t r" style="left:-50.6px;top:445px;height:12px;line-height:12px;font-size:9.0px;transform:scaleX(1.000);-webkit-text-stroke:0.3px #161616;">54,55 €</div>
<div style="position:absolute;left:270.90px;top:446.63px;width:8.80px;height:8.80px;background:#fff;border:1px solid #2e2e2e;"></div>
<div class="t r" style="left:-228.8px;top:457px;height:12px;line-height:12px;font-size:9.0px;transform:scaleX(0.930);-webkit-text-stroke:0.3px #161616;">05.07.23</div>
<div class="t l" style="left:74.8px;top:457px;height:12px;line-height:12px;font-size:9.2px;transform:scaleX(1.020);-webkit-text-stroke:0.3px #161616;">Strom</div>
<div class="t r" style="left:-50.6px;top:457px;height:12px;line-height:12px;font-size:9.0px;transform:scaleX(1.000);-webkit-text-stroke:0.3px #161616;">42,00 €</div>
<div style="position:absolute;left:270.90px;top:458.41px;width:8.80px;height:8.80px;background:#fff;border:1px solid #2e2e2e;"></div>
<div class="t r" style="left:-228.8px;top:469px;height:12px;line-height:12px;font-size:9.0px;transform:scaleX(0.930);-webkit-text-stroke:0.3px #161616;">28.07.23</div>
<div class="t l" style="left:74.8px;top:469px;height:12px;line-height:12px;font-size:9.2px;transform:scaleX(1.020);-webkit-text-stroke:0.3px #161616;">Kühlschrank</div>
<div class="t r" style="left:-50.6px;top:469px;height:12px;line-height:12px;font-size:9.0px;transform:scaleX(1.000);-webkit-text-stroke:0.3px #161616;">43,12 €</div>
<div style="position:absolute;left:270.90px;top:470.19px;width:8.80px;height:8.80px;background:#fff;border:1px solid #2e2e2e;"></div>
<div class="t r" style="left:-228.8px;top:480px;height:12px;line-height:12px;font-size:9.0px;transform:scaleX(0.930);-webkit-text-stroke:0.3px #161616;">26.07.23</div>
<div class="t l" style="left:74.8px;top:480px;height:12px;line-height:12px;font-size:9.2px;transform:scaleX(1.020);-webkit-text-stroke:0.3px #161616;">Internet</div>
<div class="t r" style="left:-50.6px;top:480px;height:12px;line-height:12px;font-size:9.0px;transform:scaleX(1.000);-webkit-text-stroke:0.3px #161616;">26,00 €</div>
<div style="position:absolute;left:270.90px;top:481.97px;width:8.80px;height:8.80px;background:#fff;border:1px solid #2e2e2e;"></div>
<div class="t r" style="left:-228.8px;top:492px;height:12px;line-height:12px;font-size:9.0px;transform:scaleX(0.930);-webkit-text-stroke:0.3px #161616;">06.01.23</div>
<div class="t l" style="left:74.8px;top:492px;height:12px;line-height:12px;font-size:9.2px;transform:scaleX(1.020);-webkit-text-stroke:0.3px #161616;">FitX</div>
<div class="t r" style="left:-50.6px;top:492px;height:12px;line-height:12px;font-size:9.0px;transform:scaleX(1.000);-webkit-text-stroke:0.3px #161616;">24,00 €</div>
<div style="position:absolute;left:270.90px;top:493.75px;width:8.80px;height:8.80px;background:#fff;border:1px solid #2e2e2e;"></div>
<div class="t r" style="left:-228.8px;top:504px;height:12px;line-height:12px;font-size:9.0px;transform:scaleX(0.930);-webkit-text-stroke:0.3px #161616;">01.07.23</div>
<div class="t l" style="left:74.8px;top:504px;height:12px;line-height:12px;font-size:9.2px;transform:scaleX(1.020);-webkit-text-stroke:0.3px #161616;">Hundeversicherung</div>
<div class="t r" style="left:-50.6px;top:504px;height:12px;line-height:12px;font-size:9.0px;transform:scaleX(1.000);-webkit-text-stroke:0.3px #161616;">20,00 €</div>
<div style="position:absolute;left:270.90px;top:505.53px;width:8.80px;height:8.80px;background:#fff;border:1px solid #2e2e2e;"></div>
<div class="t r" style="left:-228.8px;top:516px;height:12px;line-height:12px;font-size:9.0px;transform:scaleX(0.930);-webkit-text-stroke:0.3px #161616;">23.07.23</div>
<div class="t l" style="left:74.8px;top:516px;height:12px;line-height:12px;font-size:9.2px;transform:scaleX(1.020);-webkit-text-stroke:0.3px #161616;">Disney+</div>
<div class="t r" style="left:-50.6px;top:516px;height:12px;line-height:12px;font-size:9.0px;transform:scaleX(1.000);-webkit-text-stroke:0.3px #161616;">9,00 €</div>
<div style="position:absolute;left:270.90px;top:517.31px;width:8.80px;height:8.80px;background:#fff;border:1px solid #2e2e2e;"></div>
<div class="t r" style="left:-228.8px;top:528px;height:12px;line-height:12px;font-size:9.0px;transform:scaleX(0.930);-webkit-text-stroke:0.3px #161616;">06.07.23</div>
<div class="t l" style="left:74.8px;top:528px;height:12px;line-height:12px;font-size:9.2px;transform:scaleX(1.020);-webkit-text-stroke:0.3px #161616;">Amazon</div>
<div class="t r" style="left:-50.6px;top:528px;height:12px;line-height:12px;font-size:9.0px;transform:scaleX(1.000);-webkit-text-stroke:0.3px #161616;">5,00 €</div>
<div style="position:absolute;left:270.90px;top:529.09px;width:8.80px;height:8.80px;background:#fff;border:1px solid #2e2e2e;"></div>
<div class="t r" style="left:-228.8px;top:539px;height:12px;line-height:12px;font-size:9.0px;transform:scaleX(0.930);-webkit-text-stroke:0.3px #161616;">06. Jul</div>
<div class="t l" style="left:74.8px;top:539px;height:12px;line-height:12px;font-size:9.2px;transform:scaleX(1.020);-webkit-text-stroke:0.3px #161616;">Schufa</div>
<div class="t r" style="left:-50.6px;top:539px;height:12px;line-height:12px;font-size:9.0px;transform:scaleX(1.000);-webkit-text-stroke:0.3px #161616;">4,00 €</div>
<div style="position:absolute;left:270.90px;top:540.87px;width:8.80px;height:8.80px;background:#fff;border:1px solid #2e2e2e;"></div>
<div class="t r" style="left:-228.8px;top:551px;height:12px;line-height:12px;font-size:9.0px;transform:scaleX(0.930);-webkit-text-stroke:0.3px #161616;">13. Jul</div>
<div class="t l" style="left:74.8px;top:551px;height:12px;line-height:12px;font-size:9.2px;transform:scaleX(1.020);-webkit-text-stroke:0.3px #161616;">iCloud</div>
<div class="t r" style="left:-50.6px;top:551px;height:12px;line-height:12px;font-size:9.0px;transform:scaleX(1.000);-webkit-text-stroke:0.3px #161616;">3,00 €</div>
<div style="position:absolute;left:270.90px;top:552.65px;width:8.80px;height:8.80px;background:#fff;border:1px solid #2e2e2e;"></div>
<div style="position:absolute;left:270.90px;top:564.43px;width:8.80px;height:8.80px;background:#fff;border:1px solid #2e2e2e;"></div>
<div style="position:absolute;left:270.90px;top:576.21px;width:8.80px;height:8.80px;background:#fff;border:1px solid #2e2e2e;"></div>
<div style="position:absolute;left:270.90px;top:587.99px;width:8.80px;height:3.51px;background:#fff;border:1px solid #2e2e2e;border-bottom:none;"></div>
<div style="position:absolute;left:310.00px;top:376.60px;width:282.40px;height:22.60px;background:#fff;border:1px solid #d6d0d3;border-bottom:none;"></div>
<div class="t c" style="left:301.4px;top:381px;height:12px;line-height:12px;font-size:9.2px;font-weight:bold;transform:scaleX(0.955);-webkit-text-stroke:0.15px #161616;">VARIABLEN</div>
<div style="position:absolute;left:310.00px;top:399.00px;width:282.40px;height:11.00px;background:#e4b6c9;"></div>
<div class="t c" style="left:205.8px;top:400px;height:11px;line-height:11px;font-size:7.9px;font-weight:bold;transform:scaleX(0.900);-webkit-text-stroke:0.2px #161616;">KATEGORIE</div>
<div class="t c" style="left:279.0px;top:400px;height:11px;line-height:11px;font-size:7.9px;font-weight:bold;transform:scaleX(0.900);-webkit-text-stroke:0.2px #161616;">BUDGET</div>
<div class="t c" style="left:352.7px;top:400px;height:11px;line-height:11px;font-size:7.9px;font-weight:bold;transform:scaleX(0.900);-webkit-text-stroke:0.2px #161616;">AUSGABEN</div>
<div class="t c" style="left:420.0px;top:400px;height:11px;line-height:11px;font-size:7.9px;font-weight:bold;transform:scaleX(0.900);-webkit-text-stroke:0.2px #161616;">ÜBRIG</div>
<div style="position:absolute;left:310.00px;top:410.00px;width:282.40px;height:130.00px;background:#efd4df;"></div>
<div style="position:absolute;left:310.00px;top:421.00px;width:282.40px;height:1.00px;background:#e3bfcd;"></div>
<div style="position:absolute;left:310.00px;top:433.00px;width:282.40px;height:1.00px;background:#e3bfcd;"></div>
<div style="position:absolute;left:310.00px;top:445.00px;width:282.40px;height:1.00px;background:#e3bfcd;"></div>
<div style="position:absolute;left:310.00px;top:457.00px;width:282.40px;height:1.00px;background:#e3bfcd;"></div>
<div style="position:absolute;left:310.00px;top:469.00px;width:282.40px;height:1.00px;background:#e3bfcd;"></div>
<div style="position:absolute;left:310.00px;top:480.00px;width:282.40px;height:1.00px;background:#e3bfcd;"></div>
<div style="position:absolute;left:310.00px;top:492.00px;width:282.40px;height:1.00px;background:#e3bfcd;"></div>
<div style="position:absolute;left:310.00px;top:504.00px;width:282.40px;height:1.00px;background:#e3bfcd;"></div>
<div style="position:absolute;left:310.00px;top:516.00px;width:282.40px;height:1.00px;background:#e3bfcd;"></div>
<div style="position:absolute;left:310.00px;top:528.00px;width:282.40px;height:1.00px;background:#e3bfcd;"></div>
<div style="position:absolute;left:400.00px;top:410.00px;width:1.00px;height:130.00px;background:#e3bfcd;"></div>
<div style="position:absolute;left:457.00px;top:410.00px;width:1.00px;height:130.00px;background:#e3bfcd;"></div>
<div style="position:absolute;left:547.00px;top:410.00px;width:1.00px;height:130.00px;background:#e3bfcd;"></div>
<div class="t c" style="left:205.3px;top:410px;height:12px;line-height:12px;font-size:9.2px;transform:scaleX(1.020);-webkit-text-stroke:0.3px #161616;">Lebensmittel</div>
<div class="t c" style="left:279.3px;top:410px;height:12px;line-height:12px;font-size:9.0px;transform:scaleX(1.000);-webkit-text-stroke:0.3px #161616;">200,00 €</div>
<div class="t c" style="left:352.8px;top:410px;height:12px;line-height:12px;font-size:9.0px;transform:scaleX(1.000);-webkit-text-stroke:0.3px #161616;">35,00 €</div>
<div class="t r" style="left:291.6px;top:410px;height:12px;line-height:12px;font-size:9.0px;transform:scaleX(1.000);-webkit-text-stroke:0.3px #161616;">165,00 €</div>
<div class="t c" style="left:205.3px;top:422px;height:12px;line-height:12px;font-size:9.2px;transform:scaleX(1.020);-webkit-text-stroke:0.3px #161616;">Auto</div>
<div class="t c" style="left:279.3px;top:422px;height:12px;line-height:12px;font-size:9.0px;transform:scaleX(1.000);-webkit-text-stroke:0.3px #161616;">150,00 €</div>
<div class="t c" style="left:352.8px;top:422px;height:12px;line-height:12px;font-size:9.0px;transform:scaleX(1.000);-webkit-text-stroke:0.3px #161616;">0,00 €</div>
<div class="t r" style="left:291.6px;top:422px;height:12px;line-height:12px;font-size:9.0px;transform:scaleX(1.000);-webkit-text-stroke:0.3px #161616;">150,00 €</div>
<div class="t c" style="left:205.3px;top:434px;height:12px;line-height:12px;font-size:9.2px;transform:scaleX(1.020);-webkit-text-stroke:0.3px #161616;">Restaurant</div>
<div class="t c" style="left:279.3px;top:434px;height:12px;line-height:12px;font-size:9.0px;transform:scaleX(1.000);-webkit-text-stroke:0.3px #161616;">60,00 €</div>
<div class="t c" style="left:352.8px;top:434px;height:12px;line-height:12px;font-size:9.0px;transform:scaleX(1.000);-webkit-text-stroke:0.3px #161616;">0,00 €</div>
<div class="t r" style="left:291.6px;top:434px;height:12px;line-height:12px;font-size:9.0px;transform:scaleX(1.000);-webkit-text-stroke:0.3px #161616;">60,00 €</div>
<div class="t c" style="left:205.3px;top:446px;height:12px;line-height:12px;font-size:9.2px;transform:scaleX(1.020);-webkit-text-stroke:0.3px #161616;">Freizeit</div>
<div class="t c" style="left:279.3px;top:446px;height:12px;line-height:12px;font-size:9.0px;transform:scaleX(1.000);-webkit-text-stroke:0.3px #161616;">60,00 €</div>
<div class="t c" style="left:352.8px;top:446px;height:12px;line-height:12px;font-size:9.0px;transform:scaleX(1.000);-webkit-text-stroke:0.3px #161616;">0,00 €</div>
<div class="t r" style="left:291.6px;top:446px;height:12px;line-height:12px;font-size:9.0px;transform:scaleX(1.000);-webkit-text-stroke:0.3px #161616;">60,00 €</div>
<div class="t c" style="left:205.3px;top:457px;height:12px;line-height:12px;font-size:9.2px;transform:scaleX(1.020);-webkit-text-stroke:0.3px #161616;">Drogerie</div>
<div class="t c" style="left:279.3px;top:457px;height:12px;line-height:12px;font-size:9.0px;transform:scaleX(1.000);-webkit-text-stroke:0.3px #161616;">30,00 €</div>
<div class="t c" style="left:352.8px;top:457px;height:12px;line-height:12px;font-size:9.0px;transform:scaleX(1.000);-webkit-text-stroke:0.3px #161616;">0,00 €</div>
<div class="t r" style="left:291.6px;top:457px;height:12px;line-height:12px;font-size:9.0px;transform:scaleX(1.000);-webkit-text-stroke:0.3px #161616;">30,00 €</div>
<div class="t c" style="left:205.3px;top:469px;height:12px;line-height:12px;font-size:9.2px;transform:scaleX(1.020);-webkit-text-stroke:0.3px #161616;">Haustiere</div>
<div class="t c" style="left:279.3px;top:469px;height:12px;line-height:12px;font-size:9.0px;transform:scaleX(1.000);-webkit-text-stroke:0.3px #161616;">40,00 €</div>
<div class="t c" style="left:352.8px;top:469px;height:12px;line-height:12px;font-size:9.0px;transform:scaleX(1.000);-webkit-text-stroke:0.3px #161616;">0,00 €</div>
<div class="t r" style="left:291.6px;top:469px;height:12px;line-height:12px;font-size:9.0px;transform:scaleX(1.000);-webkit-text-stroke:0.3px #161616;">40,00 €</div>
<div class="t c" style="left:205.3px;top:481px;height:12px;line-height:12px;font-size:9.2px;transform:scaleX(1.020);-webkit-text-stroke:0.3px #161616;">Sonstiges</div>
<div class="t c" style="left:279.3px;top:481px;height:12px;line-height:12px;font-size:9.0px;transform:scaleX(1.000);-webkit-text-stroke:0.3px #161616;">40,00 €</div>
<div class="t c" style="left:352.8px;top:481px;height:12px;line-height:12px;font-size:9.0px;transform:scaleX(1.000);-webkit-text-stroke:0.3px #161616;">0,00 €</div>
<div class="t r" style="left:291.6px;top:481px;height:12px;line-height:12px;font-size:9.0px;transform:scaleX(1.000);-webkit-text-stroke:0.3px #161616;">40,00 €</div>
<div class="t c" style="left:205.3px;top:493px;height:12px;line-height:12px;font-size:9.2px;transform:scaleX(1.020);-webkit-text-stroke:0.3px #161616;">Coffe to Go</div>
<div class="t c" style="left:279.3px;top:493px;height:12px;line-height:12px;font-size:9.0px;transform:scaleX(1.000);-webkit-text-stroke:0.3px #161616;">20,00 €</div>
<div class="t c" style="left:352.8px;top:493px;height:12px;line-height:12px;font-size:9.0px;transform:scaleX(1.000);-webkit-text-stroke:0.3px #161616;">0,00 €</div>
<div class="t r" style="left:291.6px;top:493px;height:12px;line-height:12px;font-size:9.0px;transform:scaleX(1.000);-webkit-text-stroke:0.3px #161616;">20,00 €</div>
<div class="t c" style="left:205.3px;top:505px;height:12px;line-height:12px;font-size:9.2px;transform:scaleX(1.020);-webkit-text-stroke:0.3px #161616;">Puffer</div>
<div class="t c" style="left:279.3px;top:505px;height:12px;line-height:12px;font-size:9.0px;transform:scaleX(1.000);-webkit-text-stroke:0.3px #161616;">1.400,00 €</div>
<div class="t c" style="left:352.8px;top:505px;height:12px;line-height:12px;font-size:9.0px;transform:scaleX(1.000);-webkit-text-stroke:0.3px #161616;">1.066,26 €</div>
<div class="t r" style="left:291.6px;top:505px;height:12px;line-height:12px;font-size:9.0px;transform:scaleX(1.000);-webkit-text-stroke:0.3px #161616;">333,74 €</div>
<div class="t c" style="left:205.3px;top:517px;height:12px;line-height:12px;font-size:9.0px;transform:scaleX(0.930);-webkit-text-stroke:0.3px #161616;">0</div>
<div class="t c" style="left:279.3px;top:517px;height:12px;line-height:12px;font-size:9.0px;transform:scaleX(1.000);-webkit-text-stroke:0.3px #161616;">0,00 €</div>
<div class="t c" style="left:352.8px;top:517px;height:12px;line-height:12px;font-size:9.0px;transform:scaleX(1.000);-webkit-text-stroke:0.3px #161616;">0,00 €</div>
<div class="t r" style="left:291.6px;top:517px;height:12px;line-height:12px;font-size:9.0px;transform:scaleX(1.000);-webkit-text-stroke:0.3px #161616;">0,00 €</div>
<div class="t c" style="left:205.3px;top:528px;height:12px;line-height:12px;font-size:9.0px;transform:scaleX(0.930);-webkit-text-stroke:0.3px #161616;">0</div>
<div class="t c" style="left:279.3px;top:528px;height:12px;line-height:12px;font-size:9.0px;transform:scaleX(1.000);-webkit-text-stroke:0.3px #161616;">0,00 €</div>
<div class="t c" style="left:352.8px;top:528px;height:12px;line-height:12px;font-size:9.0px;transform:scaleX(1.000);-webkit-text-stroke:0.3px #161616;">0,00 €</div>
<div class="t r" style="left:291.6px;top:528px;height:12px;line-height:12px;font-size:9.0px;transform:scaleX(1.000);-webkit-text-stroke:0.3px #161616;">0,00 €</div>
<div style="position:absolute;left:310.00px;top:540.00px;width:282.40px;height:11.40px;background:#e4b6c9;"></div>
<div class="t c" style="left:205.3px;top:540px;height:11px;line-height:11px;font-size:8.0px;font-weight:bold;transform:scaleX(0.960);-webkit-text-stroke:0.15px #161616;">TOTAL</div>
<div class="t c" style="left:279.3px;top:540px;height:11px;line-height:11px;font-size:8.0px;font-weight:bold;transform:scaleX(0.960);-webkit-text-stroke:0.15px #161616;">2.000,00 €</div>
<div class="t c" style="left:352.8px;top:540px;height:11px;line-height:11px;font-size:8.0px;font-weight:bold;transform:scaleX(0.960);-webkit-text-stroke:0.15px #161616;">1.101,26 €</div>
<div class="t r" style="left:291.4px;top:540px;height:11px;line-height:11px;font-size:8.0px;font-weight:bold;transform:scaleX(0.960);-webkit-text-stroke:0.15px #161616;">898,74 €</div>
<div style="position:absolute;left:310.00px;top:563.60px;width:282.40px;height:28.00px;background:#fff;border:1px solid #d6d0d3;border-bottom:none;"></div>
<div class="t c" style="left:301.4px;top:569px;height:12px;line-height:12px;font-size:9.2px;font-weight:bold;transform:scaleX(0.955);-webkit-text-stroke:0.15px #161616;">SINKING FUNDS</div>
<div style="position:absolute;left:310.00px;top:587.00px;width:282.40px;height:4.50px;background:#e4b6c9;"></div>
<div style="position:absolute;left:604.30px;top:140.40px;width:361.70px;height:33.20px;background:#e4b6c9;"></div>
<div class="t c" style="left:635.3px;top:145px;height:12px;line-height:12px;font-size:9.2px;font-weight:bold;transform:scaleX(0.955);-webkit-text-stroke:0.15px #161616;">EINKOMMEN</div>
<div class="t c" style="left:499.5px;top:162px;height:11px;line-height:11px;font-size:7.9px;font-weight:bold;transform:scaleX(0.900);-webkit-text-stroke:0.2px #161616;">EINKOMMEN</div>
<div class="t c" style="left:589.7px;top:162px;height:11px;line-height:11px;font-size:7.9px;font-weight:bold;transform:scaleX(0.900);-webkit-text-stroke:0.2px #161616;">ZAHLTAG</div>
<div class="t c" style="left:680.3px;top:162px;height:11px;line-height:11px;font-size:7.9px;font-weight:bold;transform:scaleX(0.900);-webkit-text-stroke:0.2px #161616;">BETRAG</div>
<div class="t c" style="left:770.8px;top:162px;height:11px;line-height:11px;font-size:7.9px;font-weight:bold;transform:scaleX(0.900);-webkit-text-stroke:0.2px #161616;">STARTTAG</div>
<div style="position:absolute;left:604.30px;top:173.60px;width:361.70px;height:69.60px;background:#fff;border-left:1px solid #dccfd5;border-right:1px solid #dccfd5;"></div>
<div style="position:absolute;left:604.30px;top:185.00px;width:271.30px;height:1.00px;background:#e0d4d9;"></div>
<div style="position:absolute;left:604.30px;top:196.00px;width:271.30px;height:1.00px;background:#e0d4d9;"></div>
<div style="position:absolute;left:604.30px;top:208.00px;width:271.30px;height:1.00px;background:#e0d4d9;"></div>
<div style="position:absolute;left:604.30px;top:220.00px;width:271.30px;height:1.00px;background:#e0d4d9;"></div>
<div style="position:absolute;left:604.30px;top:231.00px;width:271.30px;height:1.00px;background:#e0d4d9;"></div>
<div style="position:absolute;left:694.00px;top:173.60px;width:1.00px;height:69.60px;background:#e0d4d9;"></div>
<div style="position:absolute;left:784.00px;top:173.60px;width:1.00px;height:69.60px;background:#e0d4d9;"></div>
<div style="position:absolute;left:875.00px;top:173.60px;width:1.00px;height:69.60px;background:#e0d4d9;"></div>
<div class="t c" style="left:499.5px;top:174px;height:12px;line-height:12px;font-size:9.2px;transform:scaleX(1.020);-webkit-text-stroke:0.3px #161616;">BaföG</div>
<div class="t c" style="left:589.7px;top:174px;height:12px;line-height:12px;font-size:9.0px;transform:scaleX(0.930);-webkit-text-stroke:0.3px #161616;">01. Jul</div>
<div class="t c" style="left:680.3px;top:174px;height:12px;line-height:12px;font-size:9.0px;transform:scaleX(1.000);-webkit-text-stroke:0.3px #161616;">727,80 €</div>
<div class="t c" style="left:499.5px;top:185px;height:12px;line-height:12px;font-size:9.2px;transform:scaleX(1.020);-webkit-text-stroke:0.3px #161616;">Waisenrente</div>
<div class="t c" style="left:589.7px;top:185px;height:12px;line-height:12px;font-size:9.0px;transform:scaleX(0.930);-webkit-text-stroke:0.3px #161616;">01. Jul</div>
<div class="t c" style="left:680.3px;top:185px;height:12px;line-height:12px;font-size:9.0px;transform:scaleX(1.000);-webkit-text-stroke:0.3px #161616;">182,71 €</div>
<div class="t c" style="left:499.5px;top:197px;height:12px;line-height:12px;font-size:9.2px;transform:scaleX(1.020);-webkit-text-stroke:0.3px #161616;">Nebenjob</div>
<div class="t c" style="left:589.7px;top:197px;height:12px;line-height:12px;font-size:9.0px;transform:scaleX(0.930);-webkit-text-stroke:0.3px #161616;">01. Jul</div>
<div class="t c" style="left:680.3px;top:197px;height:12px;line-height:12px;font-size:9.0px;transform:scaleX(1.000);-webkit-text-stroke:0.3px #161616;">484,89 €</div>
<div class="t c" style="left:499.5px;top:209px;height:12px;line-height:12px;font-size:9.2px;transform:scaleX(1.020);-webkit-text-stroke:0.3px #161616;">Kfw</div>
<div class="t c" style="left:589.7px;top:209px;height:12px;line-height:12px;font-size:9.0px;transform:scaleX(0.930);-webkit-text-stroke:0.3px #161616;">01. Jul</div>
<div class="t c" style="left:680.3px;top:209px;height:12px;line-height:12px;font-size:9.0px;transform:scaleX(1.000);-webkit-text-stroke:0.3px #161616;">567,77 €</div>
<div class="t c" style="left:499.5px;top:220px;height:12px;line-height:12px;font-size:9.2px;transform:scaleX(1.020);-webkit-text-stroke:0.3px #161616;">Stipendium</div>
<div class="t c" style="left:589.7px;top:220px;height:12px;line-height:12px;font-size:9.0px;transform:scaleX(0.930);-webkit-text-stroke:0.3px #161616;">01. Jul</div>
<div class="t c" style="left:680.3px;top:220px;height:12px;line-height:12px;font-size:9.0px;transform:scaleX(1.000);-webkit-text-stroke:0.3px #161616;">300,00 €</div>
<div class="t c" style="left:499.5px;top:232px;height:12px;line-height:12px;font-size:9.2px;transform:scaleX(1.020);-webkit-text-stroke:0.3px #161616;">Sonstiges</div>
<div class="t c" style="left:589.7px;top:232px;height:12px;line-height:12px;font-size:9.0px;transform:scaleX(0.930);-webkit-text-stroke:0.3px #161616;">01. Jul</div>
<div class="t c" style="left:680.3px;top:232px;height:12px;line-height:12px;font-size:9.0px;transform:scaleX(1.000);-webkit-text-stroke:0.3px #161616;">100,00 €</div>
<div class="t c" style="left:770.6px;top:201px;height:16px;line-height:16px;font-size:12.6px;transform:scaleX(0.900);-webkit-text-stroke:0.35px #161616;">01. Jul</div>
<div style="position:absolute;left:604.30px;top:243.20px;width:361.70px;height:11.20px;background:#e4b6c9;"></div>
<div class="t c" style="left:499.8px;top:244px;height:11px;line-height:11px;font-size:8.0px;font-weight:bold;transform:scaleX(0.960);-webkit-text-stroke:0.15px #161616;">TOTAL</div>
<div class="t c" style="left:680.3px;top:244px;height:11px;line-height:11px;font-size:8.0px;font-weight:bold;transform:scaleX(0.960);-webkit-text-stroke:0.15px #161616;">2.363,17 €</div>
<div style="position:absolute;left:604.30px;top:265.40px;width:361.70px;height:111.40px;background:#fff;border:1px solid #d6d0d3;"></div>
<div class="t c" style="left:635.3px;top:271px;height:12px;line-height:12px;font-size:9.2px;font-weight:bold;transform:scaleX(0.955);-webkit-text-stroke:0.15px #161616;">ZUSATZEINNAHMEN</div>
<div style="position:absolute;left:604.30px;top:288.00px;width:361.70px;height:10.40px;background:#e4b6c9;"></div>
<div class="t c" style="left:499.5px;top:288px;height:11px;line-height:11px;font-size:7.9px;font-weight:bold;transform:scaleX(0.900);-webkit-text-stroke:0.2px #161616;">EINNAHME</div>
<div class="t c" style="left:589.7px;top:288px;height:11px;line-height:11px;font-size:7.9px;font-weight:bold;transform:scaleX(0.900);-webkit-text-stroke:0.2px #161616;">DATUM</div>
<div class="t c" style="left:680.3px;top:288px;height:11px;line-height:11px;font-size:7.9px;font-weight:bold;transform:scaleX(0.900);-webkit-text-stroke:0.2px #161616;">BETRAG</div>
<div class="t c" style="left:770.8px;top:288px;height:11px;line-height:11px;font-size:7.9px;font-weight:bold;transform:scaleX(0.900);-webkit-text-stroke:0.2px #161616;">GESAMT</div>
<div style="position:absolute;left:604.30px;top:309.00px;width:361.70px;height:1.00px;background:#e0d4d9;"></div>
<div style="position:absolute;left:604.30px;top:320.00px;width:361.70px;height:1.00px;background:#e0d4d9;"></div>
<div style="position:absolute;left:604.30px;top:332.00px;width:361.70px;height:1.00px;background:#e0d4d9;"></div>
<div style="position:absolute;left:604.30px;top:343.00px;width:361.70px;height:1.00px;background:#e0d4d9;"></div>
<div style="position:absolute;left:604.30px;top:354.00px;width:361.70px;height:1.00px;background:#e0d4d9;"></div>
<div style="position:absolute;left:694.00px;top:298.40px;width:1.00px;height:67.20px;background:#e0d4d9;"></div>
<div style="position:absolute;left:784.00px;top:298.40px;width:1.00px;height:67.20px;background:#e0d4d9;"></div>
<div style="position:absolute;left:875.00px;top:298.40px;width:1.00px;height:67.20px;background:#e0d4d9;"></div>
<div class="t c" style="left:499.5px;top:298px;height:12px;line-height:12px;font-size:9.2px;transform:scaleX(1.020);-webkit-text-stroke:0.3px #161616;">Ausz. Notgroschen</div>
<div class="t c" style="left:589.7px;top:298px;height:12px;line-height:12px;font-size:9.0px;transform:scaleX(0.930);-webkit-text-stroke:0.3px #161616;">01. Jul</div>
<div class="t c" style="left:680.3px;top:298px;height:12px;line-height:12px;font-size:9.0px;transform:scaleX(1.000);-webkit-text-stroke:0.3px #161616;">500,00 €</div>
<div class="t c" style="left:770.8px;top:298px;height:12px;line-height:12px;font-size:9.0px;transform:scaleX(1.000);-webkit-text-stroke:0.3px #161616;">500,00 €</div>
<div class="t c" style="left:770.8px;top:309px;height:12px;line-height:12px;font-size:9.0px;transform:scaleX(1.000);-webkit-text-stroke:0.3px #161616;">500,00 €</div>
<div class="t c" style="left:770.8px;top:321px;height:12px;line-height:12px;font-size:9.0px;transform:scaleX(1.000);-webkit-text-stroke:0.3px #161616;">500,00 €</div>
<div class="t c" style="left:770.8px;top:332px;height:12px;line-height:12px;font-size:9.0px;transform:scaleX(1.000);-webkit-text-stroke:0.3px #161616;">500,00 €</div>
<div class="t c" style="left:770.8px;top:343px;height:12px;line-height:12px;font-size:9.0px;transform:scaleX(1.000);-webkit-text-stroke:0.3px #161616;">500,00 €</div>
<div class="t c" style="left:770.8px;top:354px;height:12px;line-height:12px;font-size:9.0px;transform:scaleX(1.000);-webkit-text-stroke:0.3px #161616;">500,00 €</div>
<div style="position:absolute;left:604.30px;top:365.60px;width:361.70px;height:11.20px;background:#e4b6c9;"></div>
<div class="t c" style="left:499.8px;top:366px;height:11px;line-height:11px;font-size:8.0px;font-weight:bold;transform:scaleX(0.960);-webkit-text-stroke:0.15px #161616;">TOTAL</div>
<div class="t c" style="left:770.8px;top:366px;height:11px;line-height:11px;font-size:8.0px;font-weight:bold;transform:scaleX(0.960);-webkit-text-stroke:0.15px #161616;">500,00 €</div>
<div style="position:absolute;left:604.30px;top:388.00px;width:361.70px;height:34.00px;background:#e4b6c9;"></div>
<div class="t c" style="left:635.3px;top:393px;height:12px;line-height:12px;font-size:9.2px;font-weight:bold;transform:scaleX(0.955);-webkit-text-stroke:0.15px #161616;">SPAREN</div>
<div class="t c" style="left:499.5px;top:410px;height:11px;line-height:11px;font-size:7.9px;font-weight:bold;transform:scaleX(0.900);-webkit-text-stroke:0.2px #161616;">SPARKONTO</div>
<div class="t c" style="left:589.7px;top:410px;height:11px;line-height:11px;font-size:7.9px;font-weight:bold;transform:scaleX(0.900);-webkit-text-stroke:0.2px #161616;">DATUM</div>
<div class="t c" style="left:680.3px;top:410px;height:11px;line-height:11px;font-size:7.9px;font-weight:bold;transform:scaleX(0.900);-webkit-text-stroke:0.2px #161616;">BETRAG</div>
<div class="t c" style="left:770.8px;top:410px;height:11px;line-height:11px;font-size:7.9px;font-weight:bold;transform:scaleX(0.900);-webkit-text-stroke:0.2px #161616;">GESAMT</div>
<div style="position:absolute;left:604.30px;top:422.00px;width:361.70px;height:70.40px;background:#fff;border-left:1px solid #dccfd5;border-right:1px solid #dccfd5;"></div>
<div style="position:absolute;left:604.30px;top:433.00px;width:361.70px;height:1.00px;background:#e0d4d9;"></div>
<div style="position:absolute;left:604.30px;top:445.00px;width:361.70px;height:1.00px;background:#e0d4d9;"></div>
<div style="position:absolute;left:604.30px;top:457.00px;width:361.70px;height:1.00px;background:#e0d4d9;"></div>
<div style="position:absolute;left:604.30px;top:468.00px;width:361.70px;height:1.00px;background:#e0d4d9;"></div>
<div style="position:absolute;left:604.30px;top:480.00px;width:361.70px;height:1.00px;background:#e0d4d9;"></div>
<div style="position:absolute;left:694.00px;top:422.00px;width:1.00px;height:70.40px;background:#e0d4d9;"></div>
<div style="position:absolute;left:784.00px;top:422.00px;width:1.00px;height:70.40px;background:#e0d4d9;"></div>
<div style="position:absolute;left:875.00px;top:422.00px;width:1.00px;height:70.40px;background:#e0d4d9;"></div>
<div class="t c" style="left:499.5px;top:422px;height:12px;line-height:12px;font-size:9.2px;transform:scaleX(1.020);-webkit-text-stroke:0.3px #161616;">Trade Republik</div>
<div class="t c" style="left:589.7px;top:422px;height:12px;line-height:12px;font-size:9.0px;transform:scaleX(0.930);-webkit-text-stroke:0.3px #161616;">01. Jul</div>
<div class="t c" style="left:680.3px;top:422px;height:12px;line-height:12px;font-size:9.0px;transform:scaleX(1.000);-webkit-text-stroke:0.3px #161616;">0,00 €</div>
<div class="t c" style="left:770.8px;top:422px;height:12px;line-height:12px;font-size:9.0px;transform:scaleX(1.000);-webkit-text-stroke:0.3px #161616;">0,00 €</div>
<div class="t c" style="left:499.5px;top:434px;height:12px;line-height:12px;font-size:9.2px;transform:scaleX(1.020);-webkit-text-stroke:0.3px #161616;">Notgroschen</div>
<div class="t c" style="left:589.7px;top:434px;height:12px;line-height:12px;font-size:9.0px;transform:scaleX(0.930);-webkit-text-stroke:0.3px #161616;">01. Jul</div>
<div class="t c" style="left:680.3px;top:434px;height:12px;line-height:12px;font-size:9.0px;transform:scaleX(1.000);-webkit-text-stroke:0.3px #161616;">0,00 €</div>
<div class="t c" style="left:770.8px;top:434px;height:12px;line-height:12px;font-size:9.0px;transform:scaleX(1.000);-webkit-text-stroke:0.3px #161616;">0,00 €</div>
<div class="t c" style="left:499.5px;top:446px;height:12px;line-height:12px;font-size:9.2px;transform:scaleX(1.020);-webkit-text-stroke:0.3px #161616;">Spartöpfe</div>
<div class="t c" style="left:589.7px;top:446px;height:12px;line-height:12px;font-size:9.0px;transform:scaleX(0.930);-webkit-text-stroke:0.3px #161616;">01. Jul</div>
<div class="t c" style="left:680.3px;top:446px;height:12px;line-height:12px;font-size:9.0px;transform:scaleX(1.000);-webkit-text-stroke:0.3px #161616;">0,00 €</div>
<div class="t c" style="left:770.8px;top:446px;height:12px;line-height:12px;font-size:9.0px;transform:scaleX(1.000);-webkit-text-stroke:0.3px #161616;">0,00 €</div>
<div class="t c" style="left:770.8px;top:457px;height:12px;line-height:12px;font-size:9.0px;transform:scaleX(1.000);-webkit-text-stroke:0.3px #161616;">0,00 €</div>
<div class="t c" style="left:770.8px;top:469px;height:12px;line-height:12px;font-size:9.0px;transform:scaleX(1.000);-webkit-text-stroke:0.3px #161616;">0,00 €</div>
<div class="t c" style="left:770.8px;top:481px;height:12px;line-height:12px;font-size:9.0px;transform:scaleX(1.000);-webkit-text-stroke:0.3px #161616;">0,00 €</div>
<div style="position:absolute;left:604.30px;top:492.40px;width:361.70px;height:12.00px;background:#e4b6c9;"></div>
<div class="t c" style="left:499.8px;top:493px;height:11px;line-height:11px;font-size:8.0px;font-weight:bold;transform:scaleX(0.960);-webkit-text-stroke:0.15px #161616;">TOTAL</div>
<div class="t c" style="left:770.8px;top:493px;height:11px;line-height:11px;font-size:8.0px;font-weight:bold;transform:scaleX(0.960);-webkit-text-stroke:0.15px #161616;">0,00 €</div>
<div style="position:absolute;left:0;top:0;width:1000px;height:591.4px;overflow:hidden;">
<div style="position:absolute;left:604.30px;top:516.00px;width:361.70px;height:90.00px;background:#fff;border:1px solid #d6d0d3;"></div>
<svg style="left:961.50px;top:516.20px;" width="5" height="5" viewBox="0 0 5 5"><path d="M0.4 0 H4.6 V4.2 Z" fill="#c8323a"/></svg>
<div class="t c" style="left:635.3px;top:522px;height:12px;line-height:12px;font-size:9.2px;font-weight:bold;transform:scaleX(0.955);-webkit-text-stroke:0.15px #161616;">JAHRESÜBERSICHT</div>
<div style="position:absolute;left:604.30px;top:540.00px;width:361.70px;height:11.60px;background:#e4b6c9;"></div>
<div class="t c" style="left:499.5px;top:540px;height:11px;line-height:11px;font-size:7.9px;font-weight:bold;transform:scaleX(0.900);-webkit-text-stroke:0.2px #161616;">MONAT</div>
<div class="t c" style="left:589.7px;top:540px;height:11px;line-height:11px;font-size:7.9px;font-weight:bold;transform:scaleX(0.900);-webkit-text-stroke:0.2px #161616;">EINNAHMEN</div>
<div class="t c" style="left:680.3px;top:540px;height:11px;line-height:11px;font-size:7.9px;font-weight:bold;transform:scaleX(0.900);-webkit-text-stroke:0.2px #161616;">AUSGABEN</div>
<div class="t c" style="left:770.8px;top:540px;height:11px;line-height:11px;font-size:7.9px;font-weight:bold;transform:scaleX(0.900);-webkit-text-stroke:0.2px #161616;">ÜBRIG</div>
<div style="position:absolute;left:604.30px;top:551.60px;width:90.10px;height:60.00px;background:#f2dbe4;"></div>
<div style="position:absolute;left:604.30px;top:563.00px;width:90.10px;height:1.00px;background:#e3bfcd;"></div>
<div style="position:absolute;left:694.40px;top:563.00px;width:271.60px;height:1.00px;background:#e0d4d9;"></div>
<div style="position:absolute;left:604.30px;top:575.00px;width:90.10px;height:1.00px;background:#e3bfcd;"></div>
<div style="position:absolute;left:694.40px;top:575.00px;width:271.60px;height:1.00px;background:#e0d4d9;"></div>
<div style="position:absolute;left:604.30px;top:586.00px;width:90.10px;height:1.00px;background:#e3bfcd;"></div>
<div style="position:absolute;left:694.40px;top:586.00px;width:271.60px;height:1.00px;background:#e0d4d9;"></div>
<div style="position:absolute;left:604.30px;top:598.00px;width:90.10px;height:1.00px;background:#e3bfcd;"></div>
<div style="position:absolute;left:694.40px;top:598.00px;width:271.60px;height:1.00px;background:#e0d4d9;"></div>
<div style="position:absolute;left:694.00px;top:551.60px;width:1.00px;height:48.40px;background:#e0d4d9;"></div>
<div style="position:absolute;left:784.00px;top:551.60px;width:1.00px;height:48.40px;background:#e0d4d9;"></div>
<div style="position:absolute;left:875.00px;top:551.60px;width:1.00px;height:48.40px;background:#e0d4d9;"></div>
<div class="t c" style="left:499.5px;top:552px;height:12px;line-height:12px;font-size:9.2px;transform:scaleX(1.020);-webkit-text-stroke:0.3px #161616;">Januar</div>
<div class="t c" style="left:589.7px;top:552px;height:12px;line-height:12px;font-size:9.0px;transform:scaleX(1.000);-webkit-text-stroke:0.3px #161616;">2.863,17 €</div>
<div class="t c" style="left:680.3px;top:552px;height:12px;line-height:12px;font-size:9.0px;transform:scaleX(1.000);-webkit-text-stroke:0.3px #161616;">926,65 €</div>
<div class="t c" style="left:770.8px;top:552px;height:12px;line-height:12px;font-size:9.0px;transform:scaleX(1.000);-webkit-text-stroke:0.3px #161616;">1.936,52 €</div>
<div class="t c" style="left:499.5px;top:564px;height:12px;line-height:12px;font-size:9.2px;transform:scaleX(1.020);-webkit-text-stroke:0.3px #161616;">Februar</div>
<div class="t c" style="left:589.7px;top:564px;height:12px;line-height:12px;font-size:9.0px;transform:scaleX(1.000);-webkit-text-stroke:0.3px #161616;">3.612,00 €</div>
<div class="t c" style="left:680.3px;top:564px;height:12px;line-height:12px;font-size:9.0px;transform:scaleX(1.000);-webkit-text-stroke:0.3px #161616;">1.596,00 €</div>
<div class="t c" style="left:770.8px;top:564px;height:12px;line-height:12px;font-size:9.0px;transform:scaleX(1.000);-webkit-text-stroke:0.3px #161616;">2.016,00 €</div>
<div class="t c" style="left:499.5px;top:575px;height:12px;line-height:12px;font-size:9.2px;transform:scaleX(1.020);-webkit-text-stroke:0.3px #161616;">März</div>
<div class="t c" style="left:589.7px;top:575px;height:12px;line-height:12px;font-size:9.0px;transform:scaleX(1.000);-webkit-text-stroke:0.3px #161616;">2.198,00 €</div>
<div class="t c" style="left:680.3px;top:575px;height:12px;line-height:12px;font-size:9.0px;transform:scaleX(1.000);-webkit-text-stroke:0.3px #161616;">1.936,00 €</div>
<div class="t c" style="left:770.8px;top:575px;height:12px;line-height:12px;font-size:9.0px;transform:scaleX(1.000);-webkit-text-stroke:0.3px #161616;">262,00 €</div>
<div class="t c" style="left:499.5px;top:587px;height:12px;line-height:12px;font-size:9.2px;transform:scaleX(1.020);-webkit-text-stroke:0.3px #161616;">April</div>
<div class="t c" style="left:589.7px;top:587px;height:12px;line-height:12px;font-size:9.0px;transform:scaleX(1.000);-webkit-text-stroke:0.3px #161616;">2.235,00 €</div>
<div class="t c" style="left:680.3px;top:587px;height:12px;line-height:12px;font-size:9.0px;transform:scaleX(1.000);-webkit-text-stroke:0.3px #161616;">1.445,00 €</div>
<div class="t c" style="left:770.8px;top:587px;height:12px;line-height:12px;font-size:9.0px;transform:scaleX(1.000);-webkit-text-stroke:0.3px #161616;">790,00 €</div>
</div>
<div style="position:absolute;left:0.00px;top:591.00px;width:1000.00px;height:17.50px;background:#ececec;border-top:1px solid #d6d6d6;"></div>
<div style="position:absolute;left:0.00px;top:608.00px;width:1000.00px;height:17.00px;background:linear-gradient(#dcdcdc,#cfcfcf);border-top:1px solid #bdbdbd;"></div>
<svg style="left:10.00px;top:596.00px;" width="7" height="8" viewBox="0 0 7 8"><path d="M5.6 0.8 L1 4 L5.6 7.2 Z" fill="#bcbcbc"/></svg>
<svg style="left:25.50px;top:596.00px;" width="7" height="8" viewBox="0 0 7 8"><path d="M1.4 0.8 L6 4 L1.4 7.2 Z" fill="#b8b8b8"/></svg>
<div style="position:absolute;left:40.50px;top:593.00px;width:1.00px;height:14.00px;background:#d6d6d6;"></div>
<div style="position:absolute;left:42.00px;top:591.50px;width:62.00px;height:16.00px;line-height:16.00px;font-family:'Liberation Sans', sans-serif;font-size:8.4px;font-weight:normal;text-align:center;color:#3a3a3a;white-space:nowrap;">Einleitung</div>
<div style="position:absolute;left:106.00px;top:593.00px;width:53.00px;height:13.20px;background:#d3a4bc;"></div>
<div style="position:absolute;left:106.00px;top:591.60px;width:53.00px;height:16.00px;line-height:16.00px;font-family:'Liberation Sans', sans-serif;font-size:8.4px;font-weight:bold;text-align:center;color:#1d1d1d;white-space:nowrap;">Kalender</div>
<div style="position:absolute;left:163.50px;top:591.00px;width:89.00px;height:16.20px;background:linear-gradient(#ffffff,#f4ecef 70%,#ecdfe5);border:1px solid #cfcfcf;border-top:none;border-radius:0 0 3px 3px;"></div>
<div style="position:absolute;left:163.50px;top:591.20px;width:89.00px;height:16.00px;line-height:16.00px;font-family:'Liberation Sans', sans-serif;font-size:8.6px;font-weight:bold;text-align:center;color:#2d6a3e;white-space:nowrap;">Monatsübersicht</div>
<div style="position:absolute;left:257.00px;top:593.00px;width:78.00px;height:13.20px;background:#d3a4bc;"></div>
<div style="position:absolute;left:257.00px;top:591.60px;width:78.00px;height:16.00px;line-height:16.00px;font-family:'Liberation Sans', sans-serif;font-size:8.4px;font-weight:bold;text-align:center;color:#1d1d1d;white-space:nowrap;">Variable Kosten</div>
<div style="position:absolute;left:342.50px;top:593.00px;width:74.00px;height:13.20px;background:#d3a4bc;"></div>
<div style="position:absolute;left:342.50px;top:591.60px;width:74.00px;height:16.00px;line-height:16.00px;font-family:'Liberation Sans', sans-serif;font-size:8.4px;font-weight:bold;text-align:center;color:#1d1d1d;white-space:nowrap;">Sinking Funds</div>
<div style="position:absolute;left:422.50px;top:593.00px;width:56.00px;height:13.20px;background:#d3a4bc;"></div>
<div style="position:absolute;left:422.50px;top:591.60px;width:56.00px;height:16.00px;line-height:16.00px;font-family:'Liberation Sans', sans-serif;font-size:8.4px;font-weight:bold;text-align:center;color:#1d1d1d;white-space:nowrap;">Spartöpfe</div>
<div style="position:absolute;left:484.00px;top:593.00px;width:73.00px;height:13.20px;background:#d3a4bc;"></div>
<div style="position:absolute;left:484.00px;top:591.60px;width:73.00px;height:16.00px;line-height:16.00px;font-family:'Liberation Sans', sans-serif;font-size:8.4px;font-weight:bold;text-align:center;color:#1d1d1d;white-space:nowrap;">Abonnements</div>
<div style="position:absolute;left:562.30px;top:592.00px;width:22.00px;height:17.00px;line-height:17.00px;font-family:'Liberation Sans', sans-serif;font-size:12.5px;font-weight:normal;text-align:center;color:#222;white-space:nowrap;">+</div>
<div style="position:absolute;left:586.00px;top:593.00px;width:1.00px;height:14.00px;background:#d6d6d6;"></div>
<div class="t c" style="left:-121.7px;top:611px;height:12px;line-height:12px;font-size:8.8px;color:#333;font-family:'Liberation Sans', sans-serif;transform:scaleX(1.018);">Bereit</div>
<svg style="left:54.00px;top:611.50px;" width="11" height="10" viewBox="0 0 11 10"><path d="M2 2 H3.6 V1 H2 Z M2 1.5 H1 M2.8 2 V8 M1.6 8 H4 M3.6 2.4 H9.6 V8.4 H4" stroke="#444" stroke-width="0.9" fill="none"/></svg>
<svg style="left:76.00px;top:611.00px;" width="12" height="11" viewBox="0 0 12 11"><circle cx="5" cy="1.8" r="1.2" fill="none" stroke="#444" stroke-width="0.8"/><path d="M1 3.6 L4 4.4 V6.6 L2.4 9.8 M9 3.6 L6 4.4 V6.6 L7.6 9.8" stroke="#444" stroke-width="0.8" fill="none"/><path d="M7 7 L10.6 10.4 M10.6 7 L7 10.4" stroke="#444" stroke-width="0.8"/></svg>
<div class="t c" style="left:-4.4px;top:611px;height:12px;line-height:12px;font-size:8.8px;color:#333;font-family:'Liberation Sans', sans-serif;transform:scaleX(1.006);">Barrierefreiheit: Untersuchen</div>
<div style="position:absolute;left:774.50px;top:609.00px;width:25.50px;height:16.00px;background:#b4b4b4;"></div>
<svg style="left:782.50px;top:612.50px;" width="10" height="10" viewBox="0 0 10 10"><rect x="0.6" y="0.6" width="8.8" height="8.8" fill="#f2f2f2" stroke="#f2f2f2" stroke-width="0.8"/><path d="M3.5 0.6 V9.4 M6.5 0.6 V9.4 M0.6 3.5 H9.4 M0.6 6.5 H9.4" stroke="#a8a8a8" stroke-width="0.8"/></svg>
<svg style="left:807.00px;top:612.50px;" width="10" height="10" viewBox="0 0 10 10"><rect x="0.6" y="0.6" width="8.8" height="8.8" fill="none" stroke="#555" stroke-width="0.9"/><rect x="2.8" y="2.8" width="4.4" height="4.4" fill="none" stroke="#555" stroke-width="0.7"/></svg>
<svg style="left:831.00px;top:612.00px;" width="10" height="10" viewBox="0 0 10 10"><rect x="0.6" y="0.6" width="8.8" height="8.8" fill="none" stroke="#444" stroke-width="1"/><path d="M3.2 0.6 V5.6 H6.8 V0.6" stroke="#444" stroke-width="1" fill="none"/></svg>
<div style="position:absolute;left:853.00px;top:607.30px;width:10.00px;height:18.00px;line-height:18.00px;font-family:'Liberation Sans', sans-serif;font-size:11px;font-weight:bold;text-align:center;color:#444;white-space:nowrap;">&minus;</div>
<div style="position:absolute;left:866.00px;top:616.40px;width:68.00px;height:1.60px;background:#8f8f8f;border-radius:1px;"></div>
<div style="position:absolute;left:894.50px;top:611.60px;width:11.00px;height:11.00px;background:#fff;border-radius:6px;box-shadow:0 0.5px 1.5px rgba(0,0,0,.45);"></div>
<div style="position:absolute;left:937.50px;top:607.30px;width:10.00px;height:18.00px;line-height:18.00px;font-family:'Liberation Sans', sans-serif;font-size:11px;font-weight:bold;text-align:center;color:#444;white-space:nowrap;">+</div>
<div class="t c" style="left:818.5px;top:611px;height:12px;line-height:12px;font-size:8.8px;color:#333;font-family:'Liberation Sans', sans-serif;transform:scaleX(1.082);">100 %</div>
</div></body></html>
